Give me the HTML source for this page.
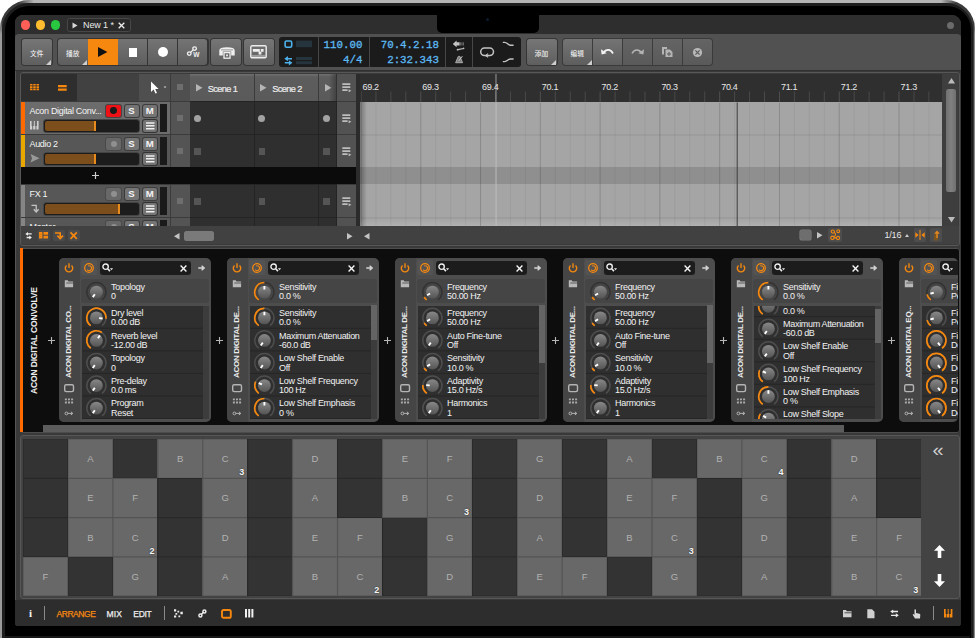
<!DOCTYPE html>
<html lang="zh"><head><meta charset="utf-8"><title>Bitwig Studio - New 1</title>
<style>
html,body{margin:0;padding:0}
body{width:975px;height:638px;overflow:hidden;background:#fff;position:relative;font-family:"Liberation Sans","Noto Sans CJK SC",sans-serif;font-size:9px;color:#ddd}
div,svg{position:absolute;box-sizing:border-box}
.t{white-space:nowrap}
.btn{background:linear-gradient(#767676,#5f5f5f);border-radius:3px;box-shadow:0 0 0 1px #353535}
.btnd{background:linear-gradient(#646464,#5a5a5a)}
.cj{font-family:"Liberation Sans","Noto Sans CJK SC",sans-serif;font-size:6.7px;font-weight:500;color:#ececec;text-align:center;white-space:nowrap}
.mono{font-family:"Liberation Mono",monospace;color:#5cb9f2;-webkit-text-stroke:0.3px #5cb9f2;white-space:nowrap;text-align:right}
.sb{background:#747474;border-radius:2px;box-shadow:0 0 0 1px #3c3c3c;color:#f4f4f4;font-weight:bold;text-align:center;font-size:9.6px;line-height:12px}
.trk{background:#565656}
.pad{background:#686868}
.padd{background:#333}
.pl{color:#b2b2b2;font-size:9.5px;text-align:center;line-height:39px;width:45px;height:39px;white-space:nowrap}
.pn{color:#f6f6f6;font-size:9px;font-weight:bold;white-space:nowrap;text-shadow:0 0 1.5px rgba(0,0,0,.7)}
.dev{background:#4d4d4d;border-radius:5px;overflow:hidden}
.pname{white-space:nowrap;font-size:9px;line-height:10px;color:#f2f2f2;letter-spacing:-0.32px}
.vt{white-space:nowrap;font-weight:bold;font-size:8px;color:#ececec;transform-origin:0 0;transform:rotate(-90deg);letter-spacing:-0.3px}
</style></head>
<body>
<div style="left:0px;top:0px;width:975px;height:700px;border-radius:29px;background:#3a3a3a"></div>
<div style="left:0px;top:0px;width:975px;height:2.6px;background:linear-gradient(90deg,rgba(176,176,176,0) 18px,#b4b4b4 34px,#b4b4b4 941px,rgba(176,176,176,0) 957px)"></div>
<div style="left:0px;top:0px;width:2.2px;height:638px;background:linear-gradient(180deg,rgba(150,150,150,0) 18px,#9a9a9a 34px)"></div>
<div style="left:973.6px;top:0px;width:1.4px;height:638px;background:linear-gradient(180deg,rgba(150,150,150,0) 18px,#8a8a8a 34px)"></div>
<div style="left:2.2px;top:2.6px;width:970.6px;height:700px;border-radius:27px;background:#1d1d1d"></div>
<div style="left:5px;top:5.5px;width:966px;height:700px;border-radius:24px;background:#000"></div>
<div style="left:5px;top:636.4px;width:965px;height:2px;background:#171717"></div>
<div style="left:15px;top:15px;width:946px;height:611px;border-radius:8px 9px 3px 3px;background:#393939;overflow:hidden">
<div style="left:-15px;top:-15px;width:975px;height:638px">
<div style="left:15px;top:15px;width:946px;height:20px;background:#2e2e2e"></div>
<div style="left:20.7px;top:20.3px;width:9.6px;height:9.6px;border-radius:50%;background:#fe5f57"></div>
<div style="left:35.7px;top:20.3px;width:9.6px;height:9.6px;border-radius:50%;background:#febc2e"></div>
<div style="left:50.7px;top:20.3px;width:9.6px;height:9.6px;border-radius:50%;background:#28c840"></div>
<div style="left:67px;top:18.3px;width:63.5px;height:13.4px;border:1px solid #484848;border-radius:2.5px;background:#2a2a2a"></div>
<svg style="left:72px;top:21.5px" width="6" height="7" viewBox="0 0 6 7"><path d="M0.5 0.5 L5.5 3.5 L0.5 6.5Z" fill="#d8d8d8"/></svg>
<div class="t" style="left:83px;top:19.5px;font-size:9px;line-height:11px;color:#e8e8e8;letter-spacing:-0.1px;">New 1 *</div>
<svg style="left:118.2px;top:21.5px" width="7" height="7" viewBox="0 0 7 7"><path d="M0.7 0.7L6.3 6.3M6.3 0.7L0.7 6.3" stroke="#eee" stroke-width="1.3"/></svg>
<div style="left:437px;top:15px;width:102px;height:17.5px;background:#000;border-radius:0 0 5px 5px"></div>
<div style="left:486.3px;top:17.5px;width:3px;height:3px;border-radius:50%;background:#0d1a2e"></div>
<div style="left:946.5px;top:21.5px;width:7px;height:7px;border-radius:50%;background:#6b6b6b"></div>
<div style="left:15px;top:34.3px;width:946px;height:36px;background:#515151;border-radius:4px 4px 0 0"></div>
<div style="left:15px;top:69.7px;width:946px;height:1.8px;background:#303030"></div>
<div style="left:15px;top:71px;width:0.8px;height:529px;background:#555"></div>
<div class="btn" style="left:22px;top:39px;width:29.5px;height:26px;"></div>
<div class="cj" style="left:22px;top:47.5px;width:29.5px;line-height:11px">文件</div>
<svg style="left:46px;top:59.5px" width="5" height="5"><path d="M5 0V5H0Z" fill="#cfcfcf"/></svg>
<div style="left:58px;top:39px;width:149.5px;height:26px;border-radius:3px;background:#353535;box-shadow:0 0 0 1px #353535"></div>
<div style="left:58px;top:39px;width:29.5px;height:26px;border-radius:3px 0 0 3px;background:linear-gradient(#747474,#5e5e5e)"></div>
<div class="cj" style="left:58px;top:47.5px;width:29.5px;line-height:11px">播放</div>
<svg style="left:82px;top:59.5px" width="5" height="5"><path d="M5 0V5H0Z" fill="#cfcfcf"/></svg>
<div style="left:88px;top:39px;width:29.5px;height:26px;background:#f6880f"></div>
<svg style="left:97.8px;top:47px" width="10" height="10"><path d="M0 0L9.4 5L0 10Z" fill="#111"/></svg>
<div style="left:118.2px;top:39px;width:29.3px;height:26px;background:linear-gradient(#747474,#5e5e5e)"></div>
<div style="left:128.5px;top:48px;width:8.5px;height:8.5px;background:#fff"></div>
<div style="left:148.2px;top:39px;width:29.3px;height:26px;background:linear-gradient(#747474,#5e5e5e)"></div>
<div style="left:157.7px;top:46.7px;width:10.6px;height:10.6px;background:#fff;border-radius:50%"></div>
<div style="left:178.2px;top:39px;width:29.3px;height:26px;background:linear-gradient(#747474,#5e5e5e);border-radius:0 3px 3px 0"></div>
<svg style="left:186px;top:46px" width="14" height="12" viewBox="0 0 14 12"><circle cx="3.3" cy="7.6" r="1.8" fill="none" stroke="#f0f0f0" stroke-width="1.3"/><circle cx="8.6" cy="2.6" r="1.8" fill="none" stroke="#f0f0f0" stroke-width="1.3"/><path d="M4.6 6.4L7.3 3.8" stroke="#f0f0f0" stroke-width="1.3"/><text x="7.3" y="10.9" font-family="Liberation Sans,sans-serif" font-size="6.6" font-weight="bold" fill="#f0f0f0">W</text></svg>
<div class="btn" style="left:211.3px;top:39px;width:29.5px;height:26px;"></div>
<svg style="left:218.5px;top:46.5px" width="16" height="12" viewBox="0 0 16 12"><path d="M0.3 8.6V3.6Q0.3 0.3 8 0.3Q15.7 0.3 15.7 3.6V8.6H12.2V4.6H3.8V8.6Z" fill="#f0f0f0"/><path d="M2 2.9H14" stroke="#6c6c6c" stroke-width="0.7"/><rect x="5" y="5.6" width="6" height="5.6" fill="none" stroke="#f0f0f0" stroke-width="1.3"/><rect x="7.1" y="7.5" width="1.8" height="1.8" fill="#f0f0f0"/></svg>
<div class="btn" style="left:244px;top:39px;width:29.8px;height:26px;"></div>
<svg style="left:250.4px;top:45.3px" width="17" height="14" viewBox="0 0 17 14"><rect x="0.8" y="0.8" width="15.4" height="12" rx="1.3" fill="none" stroke="#eee" stroke-width="1.4"/><path d="M2.8 4H9.8V6.7H2.8ZM10.8 4H13.6V6.7H10.8ZM8.6 6.7H11.4V9.4H8.6Z" fill="#eee"/><path d="M1.5 11H15.5" stroke="#eee" stroke-width="0.8"/></svg>
<div style="left:279px;top:36.8px;width:242px;height:30.4px;background:#1b1b1b;border-radius:3px"></div>
<div style="left:317.5px;top:37px;width:1.2px;height:30px;background:#474747"></div>
<div style="left:368.7px;top:37px;width:1.2px;height:30px;background:#474747"></div>
<div style="left:444.7px;top:37px;width:1.2px;height:30px;background:#474747"></div>
<div style="left:472.1px;top:37px;width:1.2px;height:30px;background:#474747"></div>
<svg style="left:284px;top:40px" width="30" height="26" viewBox="0 0 30 26"><rect x="1.1" y="1" width="6.6" height="6.2" rx="1.5" fill="none" stroke="#4db3ee" stroke-width="1.6"/><rect x="12" y="0.6" width="16" height="6.6" fill="#25343d"/><path d="M2.6 18.7H8" stroke="#4db3ee" stroke-width="1.5"/><path d="M0.4 18.7L3.9 16.1V21.3Z" fill="#4db3ee"/><path d="M0.8 22.8H6.2" stroke="#4db3ee" stroke-width="1.5"/><path d="M8.4 22.8L4.9 20.2V25.4Z" fill="#4db3ee"/><rect x="12" y="17" width="16" height="3.1" fill="#25343d"/><rect x="12" y="21.2" width="16" height="3" fill="#25343d"/></svg>
<div class="mono" style="left:319.5px;top:39.1px;width:43px;font-size:10.8px;line-height:13px">110.00</div>
<div class="mono" style="left:319.5px;top:54.1px;width:43px;font-size:10.8px;line-height:13px">4/4</div>
<div class="mono" style="left:370px;top:39.1px;width:69px;font-size:10.8px;line-height:13px">70.4.2.18</div>
<div class="mono" style="left:370px;top:54.1px;width:69px;font-size:10.8px;line-height:13px">2:32.343</div>
<svg style="left:451px;top:39px" width="16" height="26" viewBox="0 0 16 26"><path d="M1.8 4.9L5.6 1.6V3.3H8.6V6.5H5.6V8.2Z" fill="#c4c4c4"/><path d="M9.6 3.3V6.5M11 3.3V6.5M12.4 3.3V6.5" stroke="#888" stroke-width="0.8"/><path d="M6.8 10.6L12.6 9.5" stroke="#c4c4c4" stroke-width="1.1"/><circle cx="6.6" cy="10.7" r="0.9" fill="#c4c4c4"/><circle cx="12.6" cy="9.4" r="0.8" fill="#c4c4c4"/><path d="M4.6 23.7L7.3 17.4H8.9L11.6 23.7Z" fill="#7c7c7c" stroke="#b4b4b4" stroke-width="0.9"/><path d="M7.6 22L11.4 17.2" stroke="#c8c8c8" stroke-width="1"/></svg>
<svg style="left:478px;top:40px" width="40" height="25" viewBox="0 0 40 25"><rect x="2.7" y="8.1" width="12.8" height="7.4" rx="3.7" fill="none" stroke="#c4c4c4" stroke-width="1.5"/><path d="M10 13.6L7.8 15.6L10.2 17.2" stroke="#c4c4c4" stroke-width="1.1" fill="none"/><path d="M24.8 2.4H26.6C29.6 2.4 29.6 5.3 32.6 5.3H35.6" stroke="#c4c4c4" stroke-width="1.4" fill="none"/><path d="M24.8 21.6H26.6C29.6 21.6 29.6 19 32.6 19H35.6" stroke="#c4c4c4" stroke-width="1.4" fill="none"/></svg>
<div class="btn" style="left:526.5px;top:39px;width:30px;height:26px;"></div>
<div class="cj" style="left:526.5px;top:47.5px;width:30px;line-height:11px">添加</div>
<svg style="left:551px;top:59.5px" width="5" height="5"><path d="M5 0V5H0Z" fill="#cfcfcf"/></svg>
<div style="left:562.5px;top:39px;width:149px;height:26px;border-radius:3px;background:#3c3c3c;box-shadow:0 0 0 1px #3a3a3a"></div>
<div style="left:562.5px;top:39px;width:29.5px;height:26px;border-radius:3px 0 0 3px;background:linear-gradient(#747474,#5e5e5e)"></div>
<div class="cj" style="left:562.5px;top:47.5px;width:29.5px;line-height:11px">编辑</div>
<svg style="left:586.5px;top:59.5px" width="5" height="5"><path d="M5 0V5H0Z" fill="#cfcfcf"/></svg>
<div style="left:592.7px;top:39px;width:29.3px;height:26px;background:linear-gradient(#747474,#5e5e5e)"></div>
<svg style="left:600px;top:46px" width="15" height="11" viewBox="0 0 15 11"><path d="M3.5 6.8C6 2.8 10.5 2.8 13 7.5" stroke="#f2f2f2" stroke-width="1.7" fill="none"/><path d="M1 3.2L1.6 8.6L6.6 7.2Z" fill="#f2f2f2"/></svg>
<div class="btnd" style="left:622.7px;top:39px;width:29.3px;height:26px;"></div>
<svg style="left:630px;top:46px" width="15" height="11" viewBox="0 0 15 11"><path d="M11.5 6.8C9 2.8 4.5 2.8 2 7.5" stroke="#b4b4b4" stroke-width="1.5" fill="none"/><path d="M14 3.2L13.4 8.6L8.4 7.2Z" fill="#b4b4b4"/></svg>
<div class="btnd" style="left:652.7px;top:39px;width:29.3px;height:26px;"></div>
<svg style="left:660.5px;top:46px" width="13" height="12" viewBox="0 0 13 12"><path d="M1 1H6V3H3V8.5H1Z" fill="#b4b4b4"/><path d="M4.5 3.5H9L11.5 6V11H4.5Z" fill="#b4b4b4"/><path d="M8 6V10M6 8H10" stroke="#5a5a5a" stroke-width="1"/></svg>
<div class="btnd" style="left:682.7px;top:39px;width:29px;height:26px;border-radius:0 3px 3px 0"></div>
<svg style="left:691.5px;top:46.5px" width="11" height="11" viewBox="0 0 11 11"><circle cx="5.5" cy="5.5" r="4.6" fill="#b8b8b8"/><path d="M3.4 3.4L7.6 7.6M7.6 3.4L3.4 7.6" stroke="#5a5a5a" stroke-width="1.2"/></svg>
<div style="left:19.5px;top:72px;width:940px;height:173.5px;background:#3b3b3b;border:1px solid #575757;border-radius:3px"></div>
<div style="left:21px;top:73.5px;width:56px;height:27.5px;background:#2e2e2e"></div>
<div style="left:77px;top:73.5px;width:62px;height:27.5px;background:#414141"></div>
<div style="left:139px;top:73.5px;width:31px;height:27.5px;background:#4f4f4f"></div>
<div style="left:171px;top:73.5px;width:18.6px;height:27.5px;background:#4f4f4f"></div>
<svg style="left:29.9px;top:84.3px" width="10" height="7" viewBox="0 0 10 7"><path d="M0 0H2.5V1.6H0ZM3.25 0H5.75V1.6H3.25ZM6.5 0H9V1.6H6.5ZM0 2.3H2.5V3.9H0ZM3.25 2.3H5.75V3.9H3.25ZM6.5 2.3H9V3.9H6.5ZM0 4.6H2.5V6.2H0ZM3.25 4.6H5.75V6.2H3.25ZM6.5 4.6H9V6.2H6.5Z" fill="#f6880f"/></svg>
<svg style="left:58.1px;top:84.7px" width="10" height="7" viewBox="0 0 10 7"><path d="M0 0H8.7V2.3H0ZM0 3.5H8.7V5.8H0Z" fill="#f6880f"/></svg>
<svg style="left:150.3px;top:80.8px" width="18" height="14" viewBox="0 0 18 14"><path d="M1 0.5V11L3.6 8.6L5.4 12.6L7 11.9L5.2 8H8.6Z" fill="#fff"/><path d="M13.6 5.6H16.4L15 7.3Z" fill="#ccc"/></svg>
<div style="left:176.8px;top:83.9px;width:6.6px;height:6.6px;background:#6e6e6e"></div>
<div style="left:190.3px;top:73.5px;width:63.7px;height:27.5px;background:linear-gradient(#707070,#5d5d5d 3px,#5a5a5a)"></div>
<svg style="left:195.8px;top:84px" width="7" height="8"><path d="M0 0L6.5 3.8L0 7.6Z" fill="#b5b5b5"/></svg>
<div class="t" style="left:207.8px;top:83.6px;font-size:9.2px;line-height:11.2px;color:#ececec;letter-spacing:-0.62px;-webkit-text-stroke:0.2px #ececec;">Scene 1</div>
<div style="left:254.8px;top:73.5px;width:63.7px;height:27.5px;background:linear-gradient(#707070,#5d5d5d 3px,#5a5a5a)"></div>
<svg style="left:260.3px;top:84px" width="7" height="8"><path d="M0 0L6.5 3.8L0 7.6Z" fill="#b5b5b5"/></svg>
<div class="t" style="left:272.3px;top:83.6px;font-size:9.2px;line-height:11.2px;color:#ececec;letter-spacing:-0.62px;-webkit-text-stroke:0.2px #ececec;">Scene 2</div>
<div style="left:319.3px;top:73.5px;width:16.5px;height:27.5px;background:linear-gradient(#707070,#5d5d5d 3px,#5a5a5a)"></div>
<svg style="left:324.8px;top:84px" width="7" height="8"><path d="M0 0L6.5 3.8L0 7.6Z" fill="#b5b5b5"/></svg>
<div style="left:329px;top:73.5px;width:8px;height:160px;background:linear-gradient(90deg,rgba(40,40,40,0),rgba(40,40,40,.55))"></div>
<div style="left:337px;top:73.5px;width:18.5px;height:27.5px;background:#525252"></div>
<svg style="left:341.5px;top:83px" width="10" height="10" viewBox="0 0 10 10"><path d="M0.3 0.3H8.3V2H0.3ZM0.3 3.3H8.3V5H0.3ZM0.3 6.3H5.6V8H0.3Z" fill="#bdbdbd"/><path d="M6.6 6.2L9.4 7.7L6.6 9.2Z" fill="#bdbdbd"/></svg>
<div style="left:189.6px;top:101.2px;width:147.4px;height:125.2px;background:#242424"></div>
<div style="left:21px;top:102px;width:4.3px;height:32px;background:#ff6a00"></div>
<div style="left:25.3px;top:102px;width:144.5px;height:32px;background:#6c6c6c"></div>
<div class="t" style="left:29.5px;top:106.2px;font-size:9px;line-height:11px;color:#f4f4f4;letter-spacing:-0.32px;">Acon Digital Conv...</div>
<div style="left:106px;top:105px;width:15px;height:11.5px;background:#ee1115;border-radius:2px;box-shadow:0 0 0 1px #444"></div>
<div style="left:110.2px;top:107.3px;width:6.8px;height:6.8px;background:#1a1a1a;border-radius:50%"></div>
<div class="sb" style="left:124.5px;top:105px;width:14px;height:11.5px">S</div>
<div class="sb" style="left:142.5px;top:105px;width:14.5px;height:11.5px">M</div>
<div style="left:44px;top:120px;width:95px;height:11.5px;background:#1c1c1c;border-radius:2.5px;box-shadow:0 0 0 1px #444"></div>
<div style="left:45px;top:121px;width:51px;height:9.5px;background:#7b4e1b;border-radius:2px 0 0 2px"></div>
<div style="left:94.4px;top:121px;width:1.9px;height:9.5px;background:#e88a1c"></div>
<div style="left:142.5px;top:120px;width:14.5px;height:11.5px;background:#747474;border-radius:2px;box-shadow:0 0 0 1px #333"></div>
<svg style="left:145.5px;top:122px" width="9" height="8"><path d="M0 0.3H8.5V1.8H0ZM0 3.1H8.5V4.6H0ZM0 5.9H8.5V7.4H0Z" fill="#f0f0f0"/></svg>
<svg style="left:29.5px;top:121px" width="9" height="9" viewBox="0 0 9 9"><path d="M0 0H2.2V8.5H0ZM3.2 0H5.4V8.5H3.2ZM6.4 0H8.6V8.5H6.4Z" fill="#d0d0d0"/><path d="M1.6 0H3.8V5H1.6ZM4.8 0H7V5H4.8Z" fill="#6c6c6c"/><path d="M2.2 0H3.2V5H2.2ZM5.4 0H6.4V5H5.4Z" fill="#d0d0d0" opacity="0"/></svg>
<div style="left:160px;top:104px;width:7.3px;height:28px;background:#1a1a1a"></div>
<div style="left:171px;top:102px;width:18.6px;height:32px;background:#545454"></div>
<div style="left:190.3px;top:102px;width:63.7px;height:32px;background:#2f2f2f"></div>
<div style="left:254.8px;top:102px;width:63.7px;height:32px;background:#2f2f2f"></div>
<div style="left:319.3px;top:102px;width:17px;height:32px;background:#2f2f2f"></div>
<div style="left:337px;top:102px;width:18.5px;height:32px;background:#525252"></div>
<div style="left:176.8px;top:114.6px;width:6.6px;height:6.6px;background:#6e6e6e"></div>
<div style="left:193.5px;top:114.7px;width:7px;height:7px;background:#a2a2a2;border-radius:50%"></div>
<div style="left:258px;top:114.7px;width:7px;height:7px;background:#a2a2a2;border-radius:50%"></div>
<div style="left:322.5px;top:114.7px;width:7px;height:7px;background:#a2a2a2;border-radius:50%"></div>
<svg style="left:341.5px;top:114px" width="10" height="10" viewBox="0 0 10 10"><path d="M0.3 0.3H8.3V2H0.3ZM0.3 3.3H8.3V5H0.3ZM0.3 6.3H5.6V8H0.3Z" fill="#bdbdbd"/><path d="M6.6 6.2L9.4 7.7L6.6 9.2Z" fill="#bdbdbd"/></svg>
<div style="left:21px;top:135px;width:4.3px;height:32px;background:#e9a800"></div>
<div style="left:25.3px;top:135px;width:144.5px;height:32px;background:#575757"></div>
<div class="t" style="left:29.5px;top:139.2px;font-size:9px;line-height:11px;color:#f4f4f4;letter-spacing:-0.32px;">Audio 2</div>
<div style="left:106px;top:138px;width:15px;height:11.5px;background:#686868;border-radius:2px;box-shadow:0 0 0 1px #4a4a4a"></div>
<div style="left:110.5px;top:140.7px;width:6px;height:6px;background:#909090;border-radius:50%"></div>
<div class="sb" style="left:124.5px;top:138px;width:14px;height:11.5px">S</div>
<div class="sb" style="left:142.5px;top:138px;width:14.5px;height:11.5px">M</div>
<div style="left:44px;top:153px;width:95px;height:11.5px;background:#1c1c1c;border-radius:2.5px;box-shadow:0 0 0 1px #444"></div>
<div style="left:45px;top:154px;width:51px;height:9.5px;background:#7b4e1b;border-radius:2px 0 0 2px"></div>
<div style="left:94.4px;top:154px;width:1.9px;height:9.5px;background:#e88a1c"></div>
<div style="left:142.5px;top:153px;width:14.5px;height:11.5px;background:#747474;border-radius:2px;box-shadow:0 0 0 1px #333"></div>
<svg style="left:145.5px;top:155px" width="9" height="8"><path d="M0 0.3H8.5V1.8H0ZM0 3.1H8.5V4.6H0ZM0 5.9H8.5V7.4H0Z" fill="#f0f0f0"/></svg>
<svg style="left:29.5px;top:154px" width="10" height="9" viewBox="0 0 10 9"><path d="M0.5 0L9.5 4.3L0.5 8.6L2 4.3Z" fill="#999"/></svg>
<div style="left:160px;top:137px;width:7.3px;height:28px;background:#1a1a1a"></div>
<div style="left:171px;top:135px;width:18.6px;height:32px;background:#545454"></div>
<div style="left:190.3px;top:135px;width:63.7px;height:32px;background:#2f2f2f"></div>
<div style="left:254.8px;top:135px;width:63.7px;height:32px;background:#2f2f2f"></div>
<div style="left:319.3px;top:135px;width:17px;height:32px;background:#2f2f2f"></div>
<div style="left:337px;top:135px;width:18.5px;height:32px;background:#525252"></div>
<div style="left:176.8px;top:147.6px;width:6.6px;height:6.6px;background:#6e6e6e"></div>
<div style="left:194.1px;top:148px;width:6.5px;height:6.5px;background:#555"></div>
<div style="left:258.6px;top:148px;width:6.5px;height:6.5px;background:#555"></div>
<div style="left:323.1px;top:148px;width:6.5px;height:6.5px;background:#555"></div>
<svg style="left:341.5px;top:147px" width="10" height="10" viewBox="0 0 10 10"><path d="M0.3 0.3H8.3V2H0.3ZM0.3 3.3H8.3V5H0.3ZM0.3 6.3H5.6V8H0.3Z" fill="#bdbdbd"/><path d="M6.6 6.2L9.4 7.7L6.6 9.2Z" fill="#bdbdbd"/></svg>
<div style="left:21px;top:167.2px;width:335px;height:16.8px;background:#0b0b0b"></div>
<svg style="left:91.5px;top:172px" width="7" height="7"><path d="M3.5 0V7M0 3.5H7" stroke="#cfcfcf" stroke-width="1.2"/></svg>
<div style="left:21px;top:185px;width:4.3px;height:32px;background:#858585"></div>
<div style="left:25.3px;top:185px;width:144.5px;height:32px;background:#575757"></div>
<div class="t" style="left:29.5px;top:189.2px;font-size:9px;line-height:11px;color:#f4f4f4;letter-spacing:-0.32px;">FX 1</div>
<div style="left:106px;top:188px;width:15px;height:11.5px;background:#686868;border-radius:2px;box-shadow:0 0 0 1px #4a4a4a"></div>
<div style="left:110.5px;top:190.7px;width:6px;height:6px;background:#909090;border-radius:50%"></div>
<div class="sb" style="left:124.5px;top:188px;width:14px;height:11.5px">S</div>
<div class="sb" style="left:142.5px;top:188px;width:14.5px;height:11.5px">M</div>
<div style="left:44px;top:203px;width:95px;height:11.5px;background:#1c1c1c;border-radius:2.5px;box-shadow:0 0 0 1px #444"></div>
<div style="left:45px;top:204px;width:75px;height:9.5px;background:#7b4e1b;border-radius:2px 0 0 2px"></div>
<div style="left:118.4px;top:204px;width:1.9px;height:9.5px;background:#e88a1c"></div>
<div style="left:142.5px;top:203px;width:14.5px;height:11.5px;background:#747474;border-radius:2px;box-shadow:0 0 0 1px #333"></div>
<svg style="left:145.5px;top:205px" width="9" height="8"><path d="M0 0.3H8.5V1.8H0ZM0 3.1H8.5V4.6H0ZM0 5.9H8.5V7.4H0Z" fill="#f0f0f0"/></svg>
<svg style="left:30.5px;top:204px" width="9" height="9" viewBox="0 0 9 9"><path d="M0.5 1.4H5.2V7" stroke="#c4c4c4" stroke-width="1.3" fill="none"/><path d="M2.8 5.2L5.2 7.9L7.6 5.2" stroke="#c4c4c4" stroke-width="1.3" fill="none"/></svg>
<div style="left:160px;top:187px;width:7.3px;height:28px;background:#1a1a1a"></div>
<div style="left:171px;top:185px;width:18.6px;height:32px;background:#545454"></div>
<div style="left:190.3px;top:185px;width:63.7px;height:32px;background:#2f2f2f"></div>
<div style="left:254.8px;top:185px;width:63.7px;height:32px;background:#2f2f2f"></div>
<div style="left:319.3px;top:185px;width:17px;height:32px;background:#2f2f2f"></div>
<div style="left:337px;top:185px;width:18.5px;height:32px;background:#525252"></div>
<div style="left:176.8px;top:197.6px;width:6.6px;height:6.6px;background:#6e6e6e"></div>
<div style="left:194.1px;top:198px;width:6.5px;height:6.5px;background:#555"></div>
<div style="left:258.6px;top:198px;width:6.5px;height:6.5px;background:#555"></div>
<div style="left:323.1px;top:198px;width:6.5px;height:6.5px;background:#555"></div>
<svg style="left:341.5px;top:197px" width="10" height="10" viewBox="0 0 10 10"><path d="M0.3 0.3H8.3V2H0.3ZM0.3 3.3H8.3V5H0.3ZM0.3 6.3H5.6V8H0.3Z" fill="#bdbdbd"/><path d="M6.6 6.2L9.4 7.7L6.6 9.2Z" fill="#bdbdbd"/></svg>
<div style="left:21px;top:218px;width:335px;height:8.4px;overflow:hidden"><div style="left:-21px;top:-218px;width:400px;height:300px">
<div style="left:21px;top:218px;width:4.3px;height:32px;background:#858585"></div>
<div style="left:25.3px;top:218px;width:144.5px;height:32px;background:#575757"></div>
<div class="t" style="left:29.5px;top:222.2px;font-size:9px;line-height:11px;color:#f4f4f4;letter-spacing:-0.32px;">Master</div>
<div style="left:106px;top:221px;width:15px;height:11.5px;background:#686868;border-radius:2px;box-shadow:0 0 0 1px #4a4a4a"></div>
<div style="left:110.5px;top:223.7px;width:6px;height:6px;background:#909090;border-radius:50%"></div>
<div class="sb" style="left:124.5px;top:221px;width:14px;height:11.5px">S</div>
<div class="sb" style="left:142.5px;top:221px;width:14.5px;height:11.5px">M</div>
<div style="left:44px;top:236px;width:95px;height:11.5px;background:#1c1c1c;border-radius:2.5px;box-shadow:0 0 0 1px #444"></div>
<div style="left:45px;top:237px;width:75px;height:9.5px;background:#7b4e1b;border-radius:2px 0 0 2px"></div>
<div style="left:118.4px;top:237px;width:1.9px;height:9.5px;background:#e88a1c"></div>
<div style="left:142.5px;top:236px;width:14.5px;height:11.5px;background:#747474;border-radius:2px;box-shadow:0 0 0 1px #333"></div>
<svg style="left:145.5px;top:238px" width="9" height="8"><path d="M0 0.3H8.5V1.8H0ZM0 3.1H8.5V4.6H0ZM0 5.9H8.5V7.4H0Z" fill="#f0f0f0"/></svg>
<div style="left:160px;top:220px;width:7.3px;height:28px;background:#1a1a1a"></div>
<div style="left:171px;top:218px;width:18.6px;height:32px;background:#545454"></div>
<div style="left:190.3px;top:218px;width:63.7px;height:32px;background:#2f2f2f"></div>
<div style="left:254.8px;top:218px;width:63.7px;height:32px;background:#2f2f2f"></div>
<div style="left:319.3px;top:218px;width:17px;height:32px;background:#2f2f2f"></div>
<div style="left:337px;top:218px;width:18.5px;height:32px;background:#525252"></div>
<div style="left:176.8px;top:230.6px;width:6.6px;height:6.6px;background:#6e6e6e"></div>
<div style="left:194.1px;top:231px;width:6.5px;height:6.5px;background:#555"></div>
<div style="left:258.6px;top:231px;width:6.5px;height:6.5px;background:#555"></div>
<div style="left:323.1px;top:231px;width:6.5px;height:6.5px;background:#555"></div>
<svg style="left:341.5px;top:230px" width="10" height="10" viewBox="0 0 10 10"><path d="M0.3 0.3H8.3V2H0.3ZM0.3 3.3H8.3V5H0.3ZM0.3 6.3H5.6V8H0.3Z" fill="#bdbdbd"/><path d="M6.6 6.2L9.4 7.7L6.6 9.2Z" fill="#bdbdbd"/></svg>
</div></div>
<div style="left:355.5px;top:73.5px;width:5px;height:153px;background:#2b2b2b"></div>
<div style="left:360px;top:73.5px;width:582.3px;height:28px;background:#2f2f2f"></div>
<div style="left:360px;top:102px;width:582.3px;height:124.4px;background:#a5a5a5"></div>
<div style="left:360px;top:167.2px;width:582.3px;height:16.8px;background:#8f8f8f"></div>
<div style="left:360px;top:102px;width:7px;height:124.4px;background:linear-gradient(90deg,rgba(0,0,0,.3),rgba(0,0,0,0))"></div>
<div style="left:360px;top:219px;width:582.3px;height:7.4px;background:linear-gradient(rgba(255,255,255,0),rgba(255,255,255,.13))"></div>
<svg style="left:360.9px;top:73.5px" width="581.6" height="153" viewBox="0 0 581.6 153"><path d="M0.00 17.5V28" stroke="#505050" stroke-width="1"/><path d="M0.00 28.5V153" stroke="rgba(0,0,0,0.17)" stroke-width="1"/><path d="M14.95 17.5V28" stroke="#494949" stroke-width="1"/><path d="M14.95 28.5V153" stroke="rgba(0,0,0,0.055)" stroke-width="1"/><path d="M29.89 17.5V28" stroke="#494949" stroke-width="1"/><path d="M29.89 28.5V153" stroke="rgba(0,0,0,0.055)" stroke-width="1"/><path d="M44.84 17.5V28" stroke="#494949" stroke-width="1"/><path d="M44.84 28.5V153" stroke="rgba(0,0,0,0.055)" stroke-width="1"/><path d="M59.78 17.5V28" stroke="#505050" stroke-width="1"/><path d="M59.78 28.5V153" stroke="rgba(0,0,0,0.17)" stroke-width="1"/><path d="M74.72 17.5V28" stroke="#494949" stroke-width="1"/><path d="M74.72 28.5V153" stroke="rgba(0,0,0,0.055)" stroke-width="1"/><path d="M89.67 17.5V28" stroke="#494949" stroke-width="1"/><path d="M89.67 28.5V153" stroke="rgba(0,0,0,0.055)" stroke-width="1"/><path d="M104.62 17.5V28" stroke="#494949" stroke-width="1"/><path d="M104.62 28.5V153" stroke="rgba(0,0,0,0.055)" stroke-width="1"/><path d="M119.56 17.5V28" stroke="#505050" stroke-width="1"/><path d="M119.56 28.5V153" stroke="rgba(0,0,0,0.17)" stroke-width="1"/><path d="M134.50 17.5V28" stroke="#494949" stroke-width="1"/><path d="M134.50 28.5V153" stroke="rgba(0,0,0,0.055)" stroke-width="1"/><path d="M149.45 17.5V28" stroke="#494949" stroke-width="1"/><path d="M149.45 28.5V153" stroke="rgba(0,0,0,0.055)" stroke-width="1"/><path d="M164.40 17.5V28" stroke="#494949" stroke-width="1"/><path d="M164.40 28.5V153" stroke="rgba(0,0,0,0.055)" stroke-width="1"/><path d="M179.34 17.5V28" stroke="#505050" stroke-width="1"/><path d="M179.34 28.5V153" stroke="rgba(0,0,0,0.17)" stroke-width="1"/><path d="M194.28 17.5V28" stroke="#494949" stroke-width="1"/><path d="M194.28 28.5V153" stroke="rgba(0,0,0,0.055)" stroke-width="1"/><path d="M209.23 17.5V28" stroke="#494949" stroke-width="1"/><path d="M209.23 28.5V153" stroke="rgba(0,0,0,0.055)" stroke-width="1"/><path d="M224.18 17.5V28" stroke="#494949" stroke-width="1"/><path d="M224.18 28.5V153" stroke="rgba(0,0,0,0.055)" stroke-width="1"/><path d="M239.12 17.5V28" stroke="#505050" stroke-width="1"/><path d="M239.12 28.5V153" stroke="rgba(0,0,0,0.17)" stroke-width="1"/><path d="M254.06 17.5V28" stroke="#494949" stroke-width="1"/><path d="M254.06 28.5V153" stroke="rgba(0,0,0,0.055)" stroke-width="1"/><path d="M269.01 17.5V28" stroke="#494949" stroke-width="1"/><path d="M269.01 28.5V153" stroke="rgba(0,0,0,0.055)" stroke-width="1"/><path d="M283.95 17.5V28" stroke="#494949" stroke-width="1"/><path d="M283.95 28.5V153" stroke="rgba(0,0,0,0.055)" stroke-width="1"/><path d="M298.90 17.5V28" stroke="#505050" stroke-width="1"/><path d="M298.90 28.5V153" stroke="rgba(0,0,0,0.17)" stroke-width="1"/><path d="M313.85 17.5V28" stroke="#494949" stroke-width="1"/><path d="M313.85 28.5V153" stroke="rgba(0,0,0,0.055)" stroke-width="1"/><path d="M328.79 17.5V28" stroke="#494949" stroke-width="1"/><path d="M328.79 28.5V153" stroke="rgba(0,0,0,0.055)" stroke-width="1"/><path d="M343.74 17.5V28" stroke="#494949" stroke-width="1"/><path d="M343.74 28.5V153" stroke="rgba(0,0,0,0.055)" stroke-width="1"/><path d="M358.68 17.5V28" stroke="#505050" stroke-width="1"/><path d="M358.68 28.5V153" stroke="rgba(0,0,0,0.17)" stroke-width="1"/><path d="M373.62 17.5V28" stroke="#494949" stroke-width="1"/><path d="M373.62 28.5V153" stroke="rgba(0,0,0,0.055)" stroke-width="1"/><path d="M388.57 17.5V28" stroke="#494949" stroke-width="1"/><path d="M388.57 28.5V153" stroke="rgba(0,0,0,0.055)" stroke-width="1"/><path d="M403.51 17.5V28" stroke="#494949" stroke-width="1"/><path d="M403.51 28.5V153" stroke="rgba(0,0,0,0.055)" stroke-width="1"/><path d="M418.46 17.5V28" stroke="#505050" stroke-width="1"/><path d="M418.46 28.5V153" stroke="rgba(0,0,0,0.17)" stroke-width="1"/><path d="M433.41 17.5V28" stroke="#494949" stroke-width="1"/><path d="M433.41 28.5V153" stroke="rgba(0,0,0,0.055)" stroke-width="1"/><path d="M448.35 17.5V28" stroke="#494949" stroke-width="1"/><path d="M448.35 28.5V153" stroke="rgba(0,0,0,0.055)" stroke-width="1"/><path d="M463.30 17.5V28" stroke="#494949" stroke-width="1"/><path d="M463.30 28.5V153" stroke="rgba(0,0,0,0.055)" stroke-width="1"/><path d="M478.24 17.5V28" stroke="#505050" stroke-width="1"/><path d="M478.24 28.5V153" stroke="rgba(0,0,0,0.17)" stroke-width="1"/><path d="M493.19 17.5V28" stroke="#494949" stroke-width="1"/><path d="M493.19 28.5V153" stroke="rgba(0,0,0,0.055)" stroke-width="1"/><path d="M508.13 17.5V28" stroke="#494949" stroke-width="1"/><path d="M508.13 28.5V153" stroke="rgba(0,0,0,0.055)" stroke-width="1"/><path d="M523.08 17.5V28" stroke="#494949" stroke-width="1"/><path d="M523.08 28.5V153" stroke="rgba(0,0,0,0.055)" stroke-width="1"/><path d="M538.02 17.5V28" stroke="#505050" stroke-width="1"/><path d="M538.02 28.5V153" stroke="rgba(0,0,0,0.17)" stroke-width="1"/><path d="M552.97 17.5V28" stroke="#494949" stroke-width="1"/><path d="M552.97 28.5V153" stroke="rgba(0,0,0,0.055)" stroke-width="1"/><path d="M567.91 17.5V28" stroke="#494949" stroke-width="1"/><path d="M567.91 28.5V153" stroke="rgba(0,0,0,0.055)" stroke-width="1"/><path d="M0 61H582M0 144H582" stroke="rgba(0,0,0,0.1)" stroke-width="1"/><path d="M135 0V28.5" stroke="#a8a8a8" stroke-width="0.9"/><path d="M135 28.5V153" stroke="#c6c6c6" stroke-width="0.9"/><path d="M376.2 28.5V153" stroke="#3c3c3c" stroke-width="1"/></svg>
<div class="t" style="left:362.5px;top:82px;font-size:9px;line-height:11px;color:#e8e8e8;letter-spacing:-0.3px;">69.2</div>
<div class="t" style="left:422.28px;top:82px;font-size:9px;line-height:11px;color:#e8e8e8;letter-spacing:-0.3px;">69.3</div>
<div class="t" style="left:482.06px;top:82px;font-size:9px;line-height:11px;color:#e8e8e8;letter-spacing:-0.3px;">69.4</div>
<div class="t" style="left:541.84px;top:82px;font-size:9px;line-height:11px;color:#e8e8e8;letter-spacing:-0.3px;">70.1</div>
<div class="t" style="left:601.62px;top:82px;font-size:9px;line-height:11px;color:#e8e8e8;letter-spacing:-0.3px;">70.2</div>
<div class="t" style="left:661.4px;top:82px;font-size:9px;line-height:11px;color:#e8e8e8;letter-spacing:-0.3px;">70.3</div>
<div class="t" style="left:721.1800000000001px;top:82px;font-size:9px;line-height:11px;color:#e8e8e8;letter-spacing:-0.3px;">70.4</div>
<div class="t" style="left:780.96px;top:82px;font-size:9px;line-height:11px;color:#e8e8e8;letter-spacing:-0.3px;">71.1</div>
<div class="t" style="left:840.74px;top:82px;font-size:9px;line-height:11px;color:#e8e8e8;letter-spacing:-0.3px;">71.2</div>
<div class="t" style="left:900.52px;top:82px;font-size:9px;line-height:11px;color:#e8e8e8;letter-spacing:-0.3px;">71.3</div>
<div style="left:942.3px;top:73.5px;width:16px;height:153px;background:#3e3e3e"></div>
<svg style="left:947.5px;top:77.5px" width="7" height="6"><path d="M3.5 0L7 5.5H0Z" fill="#bbb"/></svg>
<div style="left:946.2px;top:88.5px;width:9.4px;height:103px;background:linear-gradient(90deg,#707070,#808080 50%,#707070);border-radius:2.5px"></div>
<svg style="left:947.5px;top:216.5px" width="7" height="6"><path d="M3.5 5.5L7 0H0Z" fill="#bbb"/></svg>
<div style="left:20.5px;top:226.4px;width:938px;height:17.8px;background:#414141"></div>
<div style="left:37.7px;top:229.8px;width:12.4px;height:11px;background:#4b4b4b;border-radius:2px"></div>
<div style="left:52.7px;top:229.8px;width:12.4px;height:11px;background:#4b4b4b;border-radius:2px"></div>
<div style="left:67.6px;top:229.8px;width:12.4px;height:11px;background:#4b4b4b;border-radius:2px"></div>
<svg style="left:25px;top:230px" width="60" height="12" viewBox="0 0 60 12"><path d="M2.2 3.9H6.7M1.6 7.5H5.6" stroke="#ececec" stroke-width="1.3"/><path d="M0.3 3.9L3 2V5.8ZM6.9 7.5L4.2 5.6V9.4Z" fill="#ececec"/><path d="M14 2.1H17.4V8.4H14ZM18.5 2.1H23V4.7H18.5ZM18.5 5.8H23V8.4H18.5Z" fill="#f6880f"/><path d="M14 4.2H17.4M14 6.3H17.4" stroke="#c8700e" stroke-width="0.5"/><path d="M30 3H35.2V7.6" stroke="#f6880f" stroke-width="1.6" fill="none"/><path d="M32.4 5.6L35.2 8.6L38 5.6" stroke="#f6880f" stroke-width="1.6" fill="none"/><path d="M45.5 2.3L51.8 8.8M51.8 2.3L45.5 8.8" stroke="#f6880f" stroke-width="1.7"/></svg>
<svg style="left:174px;top:232.5px" width="6" height="7"><path d="M5.5 0V6.4L0 3.2Z" fill="#c4c4c4"/></svg>
<div style="left:184px;top:230.5px;width:30px;height:10.5px;background:#7a7a7a;border-radius:2.5px"></div>
<svg style="left:346.5px;top:232.5px" width="6" height="7"><path d="M0 0V6.4L5.5 3.2Z" fill="#c4c4c4"/></svg>
<svg style="left:363.5px;top:232.5px" width="6" height="7"><path d="M5.5 0V6.4L0 3.2Z" fill="#c4c4c4"/></svg>
<div style="left:799.5px;top:230px;width:11.5px;height:10px;background:#6e6e6e;border-radius:2px;box-shadow:0 0 0 0.6px #7c7c7c"></div>
<svg style="left:816.5px;top:231.8px" width="6" height="7"><path d="M0 0V6.4L5.5 3.2Z" fill="#c4c4c4"/></svg>
<div style="left:827.5px;top:227.8px;width:14.5px;height:14.5px;background:#4d4d4d;border-radius:2px"></div>
<svg style="left:829.5px;top:229.2px" width="11" height="12" viewBox="0 0 11 12"><circle cx="2.8" cy="2.6" r="1.6" fill="none" stroke="#f6880f" stroke-width="1.1"/><circle cx="8.2" cy="2.2" r="1.4" fill="none" stroke="#f6880f" stroke-width="1.1"/><circle cx="2.4" cy="8.8" r="1.7" fill="none" stroke="#f6880f" stroke-width="1.1"/><circle cx="8" cy="9" r="1.6" fill="none" stroke="#f6880f" stroke-width="1.1"/><path d="M4.2 3.4C6 5 6 6 4 8.2M4.2 8.9H6.4" stroke="#f6880f" stroke-width="1.1" fill="none"/></svg>
<div class="t" style="left:884.5px;top:229.8px;font-size:9px;line-height:11px;color:#e6e6e6;letter-spacing:-0.2px;">1/16</div>
<svg style="left:904.5px;top:233.8px" width="4" height="3"><path d="M2 0L4 3H0Z" fill="#ccc"/></svg>
<div style="left:913.5px;top:227.8px;width:12.5px;height:14.5px;background:#4d4d4d;border-radius:2px"></div>
<svg style="left:914.5px;top:230.2px" width="10" height="10" viewBox="0 0 10 10"><path d="M5 0V10" stroke="#f6880f" stroke-width="1.1"/><path d="M0.3 2.2L3.6 5L0.3 7.8ZM9.7 2.2L6.4 5L9.7 7.8Z" fill="#f6880f"/></svg>
<div style="left:929.5px;top:227.8px;width:12.5px;height:14.5px;background:#4d4d4d;border-radius:2px"></div>
<svg style="left:931px;top:229.7px" width="10" height="11" viewBox="0 0 10 11"><path d="M3 4.5H7V10.5H3Z" fill="#7a5520"/><path d="M6 0.5L8.8 3.8H3.2Z" fill="#e88a1c"/><path d="M5.3 3.5H6.7V8H5.3Z" fill="#e88a1c"/></svg>
<div style="left:19.5px;top:247.5px;width:940px;height:185px;background:#0d0d0d;border:1px solid #4c4c4c;border-radius:3px;z-index:0"></div>
<div style="left:20px;top:248.3px;width:3.2px;height:183.4px;background:#ff6a00"></div>
<div class="vt" style="left:28.5px;top:394px;font-size:8.5px;line-height:10px;letter-spacing:-0.15px">ACON DIGITAL CONVOLVE</div>
<div style="left:43px;top:425px;width:801px;height:6.5px;background:#5c5c5c"></div>
<svg width="0" height="0" style="left:0;top:0"><defs><linearGradient id="kg" x1="0" y1="0" x2="0" y2="1"><stop offset="0" stop-color="#888"/><stop offset="1" stop-color="#545454"/></linearGradient></defs></svg>
<svg style="left:47.5px;top:336.5px" width="7" height="7"><path d="M3.5 0V7M0 3.5H7" stroke="#b8b8b8" stroke-width="1.1"/></svg>
<div class="dev" style="left:59px;top:258.2px;width:152px;height:163.6px">
<div style="left:0;top:0;width:20.6px;height:164px;background:#454545"></div>
<svg style="left:0;top:0" width="21" height="164" viewBox="0 0 21 164"><path d="M7.5 7.4A3.7 3.7 0 1 0 12.5 7.4" stroke="#f6880f" stroke-width="1.4" fill="none"/><path d="M10 5.2V10" stroke="#f6880f" stroke-width="1.4"/><path d="M5.8 22.2H8.8L9.5 23.4H14.1V29.2H5.8Z" fill="#b9b9b9"/><path d="M7.3 25H14.1" stroke="#454545" stroke-width="0.8"/><rect x="5.7" y="126.8" width="8.8" height="6.8" rx="1.5" fill="none" stroke="#b4b4b4" stroke-width="1.4"/><path d="M5.9 140.4H7.9V142.2H5.9ZM9 140.4H11V142.2H9ZM12.1 140.4H14.1V142.2H12.1ZM5.9 143.6H7.9V145.4H5.9ZM9 143.6H11V145.4H9ZM12.1 143.6H14.1V145.4H12.1Z" fill="#a8a8a8"/><circle cx="7.4" cy="155.4" r="1.4" fill="none" stroke="#b4b4b4" stroke-width="1"/><path d="M8.8 155.4H13.6M11.9 153.8L13.8 155.4L11.9 157" stroke="#b4b4b4" stroke-width="1" fill="none"/></svg>
<div class="vt" style="left:5.2px;top:120.3px;font-size:8px;line-height:10px">ACON DIGITAL CO...</div>
<div style="left:22.4px;top:1.8px;width:15.6px;height:15.4px;background:#535353;border-radius:2px"></div>
<svg style="left:24.3px;top:3.8px" width="12" height="12" viewBox="0 0 12 12"><circle cx="6" cy="6" r="4.3" fill="none" stroke="#f6880f" stroke-width="1.3"/><path d="M4.2 7.6A2.4 2.4 0 1 0 5.2 4" fill="none" stroke="#f6880f" stroke-width="1.1"/></svg>
<div style="left:40.5px;top:2.8px;width:91.5px;height:14.5px;background:#1c1c1c;border-radius:3px"></div>
<svg style="left:43px;top:5px" width="13" height="10" viewBox="0 0 13 10"><circle cx="3.6" cy="3.7" r="2.7" fill="none" stroke="#f0f0f0" stroke-width="1.4"/><path d="M5.6 5.7L8 8.1" stroke="#f0f0f0" stroke-width="1.6"/><path d="M7.9 5.2H11.1L9.5 7.2Z" fill="#e6e6e6"/></svg>
<svg style="left:121.2px;top:6.5px" width="7" height="7" viewBox="0 0 7 7"><path d="M0.6 0.6L6.4 6.4M6.4 0.6L0.6 6.4" stroke="#f4f4f4" stroke-width="1.4"/></svg>
<svg style="left:139.3px;top:7px" width="7" height="6" viewBox="0 0 7 6"><path d="M0.3 3H5M3.6 0.8L6.2 3L3.6 5.2" stroke="#d8d8d8" stroke-width="1.3" fill="none"/></svg>
<div style="left:22.4px;top:20.8px;width:127.3px;height:23.9px;background:#454545;border-radius:3px"></div>
<div style="left:22.5px;top:47.6px;width:127.5px;height:113.4px;background:#3c3c3c"></div>
<div style="left:22.5px;top:47.6px;width:121.5px;height:113.4px;background:#2f2f2f;overflow:hidden">
<svg style="left:0;top:0" width="122" height="114" viewBox="0 0 122 114"><path d="M0 22.30H122" stroke="#262626" stroke-width="1"/><path d="M8.76 19.67A9.6 9.6 0 1 1 20.04 19.67" fill="none" stroke="#4e4e4e" stroke-width="1.5"/><path d="M8.76 19.67A9.6 9.6 0 1 1 23.96 12.74" fill="none" stroke="#f6880f" stroke-width="1.7"/><circle cx="14.4" cy="11.9" r="6.4" fill="url(#kg)"/><path d="M17.09 12.14L20.58 12.44" stroke="#fff" stroke-width="1.9"/><path d="M0 44.85H122" stroke="#262626" stroke-width="1"/><path d="M8.76 42.22A9.6 9.6 0 1 1 20.04 42.22" fill="none" stroke="#4e4e4e" stroke-width="1.5"/><path d="M8.76 42.22A9.6 9.6 0 0 1 19.85 26.54" fill="none" stroke="#f6880f" stroke-width="1.7"/><circle cx="14.4" cy="34.45" r="6.4" fill="url(#kg)"/><path d="M15.93 32.23L17.92 29.34" stroke="#fff" stroke-width="1.9"/><path d="M0 67.40H122" stroke="#262626" stroke-width="1"/><path d="M8.76 64.77A9.6 9.6 0 1 1 20.04 64.77" fill="none" stroke="#4e4e4e" stroke-width="1.5"/><circle cx="14.4" cy="57.0" r="6.4" fill="url(#kg)"/><path d="M12.81 59.18L10.76 62.02" stroke="#fff" stroke-width="1.9"/><path d="M0 89.95H122" stroke="#262626" stroke-width="1"/><path d="M8.76 87.32A9.6 9.6 0 1 1 20.04 87.32" fill="none" stroke="#4e4e4e" stroke-width="1.5"/><circle cx="14.4" cy="79.55" r="6.4" fill="url(#kg)"/><path d="M12.81 81.73L10.76 84.57" stroke="#fff" stroke-width="1.9"/><path d="M0 112.50H122" stroke="#262626" stroke-width="1"/><path d="M8.76 109.87A9.6 9.6 0 1 1 20.04 109.87" fill="none" stroke="#4e4e4e" stroke-width="1.5"/><circle cx="14.4" cy="102.1" r="6.4" fill="url(#kg)"/><path d="M12.81 104.28L10.76 107.12" stroke="#fff" stroke-width="1.9"/><path d="M0 135.05H122" stroke="#262626" stroke-width="1"/><path d="M8.76 132.42A9.6 9.6 0 1 1 20.04 132.42" fill="none" stroke="#4e4e4e" stroke-width="1.5"/><circle cx="14.4" cy="124.65" r="6.4" fill="url(#kg)"/><path d="M12.81 126.83L10.76 129.67" stroke="#fff" stroke-width="1.9"/></svg>
<div class="pname" style="left:29.6px;top:2.20px">Dry level</div>
<div class="pname" style="left:29.6px;top:11.70px">0.00 dB</div>
<div class="pname" style="left:29.6px;top:24.75px">Reverb level</div>
<div class="pname" style="left:29.6px;top:34.25px">-12.00 dB</div>
<div class="pname" style="left:29.6px;top:47.30px">Topology</div>
<div class="pname" style="left:29.6px;top:56.80px">0</div>
<div class="pname" style="left:29.6px;top:69.85px">Pre-delay</div>
<div class="pname" style="left:29.6px;top:79.35px">0.0 ms</div>
<div class="pname" style="left:29.6px;top:92.40px">Program</div>
<div class="pname" style="left:29.6px;top:101.90px">Reset</div>
<div class="pname" style="left:29.6px;top:114.95px">Impulse</div>
<div class="pname" style="left:29.6px;top:124.45px">1</div>
</div>
<svg style="left:22.5px;top:20.8px" width="40" height="26" viewBox="0 0 40 26"><path d="M8.76 20.87A9.6 9.6 0 1 1 20.04 20.87" fill="none" stroke="#333" stroke-width="1.5"/><circle cx="14.4" cy="13.1" r="6.4" fill="url(#kg)"/><path d="M12.81 15.28L10.76 18.12" stroke="#fff" stroke-width="1.9"/></svg>
<div class="pname" style="left:52.1px;top:23.7px">Topology</div>
<div class="pname" style="left:52.1px;top:33.2px">0</div>
</div>
<svg style="left:215.5px;top:336.5px" width="7" height="7"><path d="M3.5 0V7M0 3.5H7" stroke="#b8b8b8" stroke-width="1.1"/></svg>
<div class="dev" style="left:227px;top:258.2px;width:152px;height:163.6px">
<div style="left:0;top:0;width:20.6px;height:164px;background:#454545"></div>
<svg style="left:0;top:0" width="21" height="164" viewBox="0 0 21 164"><path d="M7.5 7.4A3.7 3.7 0 1 0 12.5 7.4" stroke="#f6880f" stroke-width="1.4" fill="none"/><path d="M10 5.2V10" stroke="#f6880f" stroke-width="1.4"/><path d="M5.8 22.2H8.8L9.5 23.4H14.1V29.2H5.8Z" fill="#b9b9b9"/><path d="M7.3 25H14.1" stroke="#454545" stroke-width="0.8"/><rect x="5.7" y="126.8" width="8.8" height="6.8" rx="1.5" fill="none" stroke="#b4b4b4" stroke-width="1.4"/><path d="M5.9 140.4H7.9V142.2H5.9ZM9 140.4H11V142.2H9ZM12.1 140.4H14.1V142.2H12.1ZM5.9 143.6H7.9V145.4H5.9ZM9 143.6H11V145.4H9ZM12.1 143.6H14.1V145.4H12.1Z" fill="#a8a8a8"/><circle cx="7.4" cy="155.4" r="1.4" fill="none" stroke="#b4b4b4" stroke-width="1"/><path d="M8.8 155.4H13.6M11.9 153.8L13.8 155.4L11.9 157" stroke="#b4b4b4" stroke-width="1" fill="none"/></svg>
<div class="vt" style="left:5.2px;top:120.3px;font-size:8px;line-height:10px">ACON DIGITAL DE...</div>
<div style="left:22.4px;top:1.8px;width:15.6px;height:15.4px;background:#535353;border-radius:2px"></div>
<svg style="left:24.3px;top:3.8px" width="12" height="12" viewBox="0 0 12 12"><circle cx="6" cy="6" r="4.3" fill="none" stroke="#f6880f" stroke-width="1.3"/><path d="M4.2 7.6A2.4 2.4 0 1 0 5.2 4" fill="none" stroke="#f6880f" stroke-width="1.1"/></svg>
<div style="left:40.5px;top:2.8px;width:91.5px;height:14.5px;background:#1c1c1c;border-radius:3px"></div>
<svg style="left:43px;top:5px" width="13" height="10" viewBox="0 0 13 10"><circle cx="3.6" cy="3.7" r="2.7" fill="none" stroke="#f0f0f0" stroke-width="1.4"/><path d="M5.6 5.7L8 8.1" stroke="#f0f0f0" stroke-width="1.6"/><path d="M7.9 5.2H11.1L9.5 7.2Z" fill="#e6e6e6"/></svg>
<svg style="left:121.2px;top:6.5px" width="7" height="7" viewBox="0 0 7 7"><path d="M0.6 0.6L6.4 6.4M6.4 0.6L0.6 6.4" stroke="#f4f4f4" stroke-width="1.4"/></svg>
<svg style="left:139.3px;top:7px" width="7" height="6" viewBox="0 0 7 6"><path d="M0.3 3H5M3.6 0.8L6.2 3L3.6 5.2" stroke="#d8d8d8" stroke-width="1.3" fill="none"/></svg>
<div style="left:22.4px;top:20.8px;width:127.3px;height:23.9px;background:#454545;border-radius:3px"></div>
<div style="left:22.5px;top:47.6px;width:127.5px;height:113.4px;background:#3c3c3c"></div>
<div style="left:22.5px;top:47.6px;width:121.5px;height:113.4px;background:#2f2f2f;overflow:hidden">
<svg style="left:0;top:0" width="122" height="114" viewBox="0 0 122 114"><path d="M0 22.30H122" stroke="#262626" stroke-width="1"/><path d="M8.76 19.67A9.6 9.6 0 1 1 20.04 19.67" fill="none" stroke="#4e4e4e" stroke-width="1.5"/><path d="M8.76 19.67A9.6 9.6 0 0 1 14.40 2.30" fill="none" stroke="#f6880f" stroke-width="1.7"/><circle cx="14.4" cy="11.9" r="6.4" fill="url(#kg)"/><path d="M14.40 9.20L14.40 5.70" stroke="#fff" stroke-width="1.9"/><path d="M0 44.85H122" stroke="#262626" stroke-width="1"/><path d="M8.76 42.22A9.6 9.6 0 1 1 20.04 42.22" fill="none" stroke="#4e4e4e" stroke-width="1.5"/><circle cx="14.4" cy="34.45" r="6.4" fill="url(#kg)"/><path d="M12.81 36.63L10.76 39.47" stroke="#fff" stroke-width="1.9"/><path d="M0 67.40H122" stroke="#262626" stroke-width="1"/><path d="M8.76 64.77A9.6 9.6 0 1 1 20.04 64.77" fill="none" stroke="#4e4e4e" stroke-width="1.5"/><circle cx="14.4" cy="57.0" r="6.4" fill="url(#kg)"/><path d="M12.81 59.18L10.76 62.02" stroke="#fff" stroke-width="1.9"/><path d="M0 89.95H122" stroke="#262626" stroke-width="1"/><path d="M8.76 87.32A9.6 9.6 0 1 1 20.04 87.32" fill="none" stroke="#4e4e4e" stroke-width="1.5"/><path d="M8.76 87.32A9.6 9.6 0 0 1 5.61 75.68" fill="none" stroke="#f6880f" stroke-width="1.7"/><circle cx="14.4" cy="79.55" r="6.4" fill="url(#kg)"/><path d="M11.93 78.46L8.73 77.05" stroke="#fff" stroke-width="1.9"/><path d="M0 112.50H122" stroke="#262626" stroke-width="1"/><path d="M8.76 109.87A9.6 9.6 0 1 1 20.04 109.87" fill="none" stroke="#4e4e4e" stroke-width="1.5"/><path d="M8.76 109.87A9.6 9.6 0 0 1 14.40 92.50" fill="none" stroke="#f6880f" stroke-width="1.7"/><circle cx="14.4" cy="102.1" r="6.4" fill="url(#kg)"/><path d="M14.40 99.40L14.40 95.90" stroke="#fff" stroke-width="1.9"/><path d="M0 135.05H122" stroke="#262626" stroke-width="1"/><path d="M8.76 132.42A9.6 9.6 0 1 1 20.04 132.42" fill="none" stroke="#4e4e4e" stroke-width="1.5"/><path d="M8.76 132.42A9.6 9.6 0 0 1 6.29 119.51" fill="none" stroke="#f6880f" stroke-width="1.7"/><circle cx="14.4" cy="124.65" r="6.4" fill="url(#kg)"/><path d="M12.12 123.20L9.17 121.33" stroke="#fff" stroke-width="1.9"/></svg>
<div class="pname" style="left:29.6px;top:2.20px">Sensitivity</div>
<div class="pname" style="left:29.6px;top:11.70px">0.0 %</div>
<div class="pname" style="left:29.6px;top:24.75px">Maximum Attenuation</div>
<div class="pname" style="left:29.6px;top:34.25px">-60.0 dB</div>
<div class="pname" style="left:29.6px;top:47.30px">Low Shelf Enable</div>
<div class="pname" style="left:29.6px;top:56.80px">Off</div>
<div class="pname" style="left:29.6px;top:69.85px">Low Shelf Frequency</div>
<div class="pname" style="left:29.6px;top:79.35px">100 Hz</div>
<div class="pname" style="left:29.6px;top:92.40px">Low Shelf Emphasis</div>
<div class="pname" style="left:29.6px;top:101.90px">0 %</div>
<div class="pname" style="left:29.6px;top:114.95px">Low Shelf Slope</div>
<div class="pname" style="left:29.6px;top:124.45px">12 dB</div>
</div>
<div style="left:144px;top:47.1px;width:6px;height:34.7px;background:#646464"></div>
<svg style="left:22.5px;top:20.8px" width="40" height="26" viewBox="0 0 40 26"><path d="M8.76 20.87A9.6 9.6 0 1 1 20.04 20.87" fill="none" stroke="#333" stroke-width="1.5"/><path d="M8.76 20.87A9.6 9.6 0 0 1 14.40 3.50" fill="none" stroke="#f6880f" stroke-width="1.7"/><circle cx="14.4" cy="13.1" r="6.4" fill="url(#kg)"/><path d="M14.40 10.40L14.40 6.90" stroke="#fff" stroke-width="1.9"/></svg>
<div class="pname" style="left:52.1px;top:23.7px">Sensitivity</div>
<div class="pname" style="left:52.1px;top:33.2px">0.0 %</div>
</div>
<svg style="left:383.8px;top:336.5px" width="7" height="7"><path d="M3.5 0V7M0 3.5H7" stroke="#b8b8b8" stroke-width="1.1"/></svg>
<div class="dev" style="left:395px;top:258.2px;width:152px;height:163.6px">
<div style="left:0;top:0;width:20.6px;height:164px;background:#454545"></div>
<svg style="left:0;top:0" width="21" height="164" viewBox="0 0 21 164"><path d="M7.5 7.4A3.7 3.7 0 1 0 12.5 7.4" stroke="#f6880f" stroke-width="1.4" fill="none"/><path d="M10 5.2V10" stroke="#f6880f" stroke-width="1.4"/><path d="M5.8 22.2H8.8L9.5 23.4H14.1V29.2H5.8Z" fill="#b9b9b9"/><path d="M7.3 25H14.1" stroke="#454545" stroke-width="0.8"/><rect x="5.7" y="126.8" width="8.8" height="6.8" rx="1.5" fill="none" stroke="#b4b4b4" stroke-width="1.4"/><path d="M5.9 140.4H7.9V142.2H5.9ZM9 140.4H11V142.2H9ZM12.1 140.4H14.1V142.2H12.1ZM5.9 143.6H7.9V145.4H5.9ZM9 143.6H11V145.4H9ZM12.1 143.6H14.1V145.4H12.1Z" fill="#a8a8a8"/><circle cx="7.4" cy="155.4" r="1.4" fill="none" stroke="#b4b4b4" stroke-width="1"/><path d="M8.8 155.4H13.6M11.9 153.8L13.8 155.4L11.9 157" stroke="#b4b4b4" stroke-width="1" fill="none"/></svg>
<div class="vt" style="left:5.2px;top:120.3px;font-size:8px;line-height:10px">ACON DIGITAL DE...</div>
<div style="left:22.4px;top:1.8px;width:15.6px;height:15.4px;background:#535353;border-radius:2px"></div>
<svg style="left:24.3px;top:3.8px" width="12" height="12" viewBox="0 0 12 12"><circle cx="6" cy="6" r="4.3" fill="none" stroke="#f6880f" stroke-width="1.3"/><path d="M4.2 7.6A2.4 2.4 0 1 0 5.2 4" fill="none" stroke="#f6880f" stroke-width="1.1"/></svg>
<div style="left:40.5px;top:2.8px;width:91.5px;height:14.5px;background:#1c1c1c;border-radius:3px"></div>
<svg style="left:43px;top:5px" width="13" height="10" viewBox="0 0 13 10"><circle cx="3.6" cy="3.7" r="2.7" fill="none" stroke="#f0f0f0" stroke-width="1.4"/><path d="M5.6 5.7L8 8.1" stroke="#f0f0f0" stroke-width="1.6"/><path d="M7.9 5.2H11.1L9.5 7.2Z" fill="#e6e6e6"/></svg>
<svg style="left:121.2px;top:6.5px" width="7" height="7" viewBox="0 0 7 7"><path d="M0.6 0.6L6.4 6.4M6.4 0.6L0.6 6.4" stroke="#f4f4f4" stroke-width="1.4"/></svg>
<svg style="left:139.3px;top:7px" width="7" height="6" viewBox="0 0 7 6"><path d="M0.3 3H5M3.6 0.8L6.2 3L3.6 5.2" stroke="#d8d8d8" stroke-width="1.3" fill="none"/></svg>
<div style="left:22.4px;top:20.8px;width:127.3px;height:23.9px;background:#454545;border-radius:3px"></div>
<div style="left:22.5px;top:47.6px;width:127.5px;height:113.4px;background:#3c3c3c"></div>
<div style="left:22.5px;top:47.6px;width:121.5px;height:113.4px;background:#2f2f2f;overflow:hidden">
<svg style="left:0;top:0" width="122" height="114" viewBox="0 0 122 114"><path d="M0 22.30H122" stroke="#262626" stroke-width="1"/><path d="M8.76 19.67A9.6 9.6 0 1 1 20.04 19.67" fill="none" stroke="#4e4e4e" stroke-width="1.5"/><path d="M8.76 19.67A9.6 9.6 0 0 1 6.17 16.84" fill="none" stroke="#f6880f" stroke-width="1.7"/><circle cx="14.4" cy="11.9" r="6.4" fill="url(#kg)"/><path d="M12.08 13.29L9.08 15.09" stroke="#fff" stroke-width="1.9"/><path d="M0 44.85H122" stroke="#262626" stroke-width="1"/><path d="M8.76 42.22A9.6 9.6 0 1 1 20.04 42.22" fill="none" stroke="#4e4e4e" stroke-width="1.5"/><circle cx="14.4" cy="34.45" r="6.4" fill="url(#kg)"/><path d="M12.81 36.63L10.76 39.47" stroke="#fff" stroke-width="1.9"/><path d="M0 67.40H122" stroke="#262626" stroke-width="1"/><path d="M8.76 64.77A9.6 9.6 0 1 1 20.04 64.77" fill="none" stroke="#4e4e4e" stroke-width="1.5"/><path d="M8.76 64.77A9.6 9.6 0 0 1 6.17 61.94" fill="none" stroke="#f6880f" stroke-width="1.7"/><circle cx="14.4" cy="57.0" r="6.4" fill="url(#kg)"/><path d="M12.08 58.39L9.08 60.19" stroke="#fff" stroke-width="1.9"/><path d="M0 89.95H122" stroke="#262626" stroke-width="1"/><path d="M8.76 87.32A9.6 9.6 0 1 1 20.04 87.32" fill="none" stroke="#4e4e4e" stroke-width="1.5"/><path d="M8.76 87.32A9.6 9.6 0 0 1 4.82 78.95" fill="none" stroke="#f6880f" stroke-width="1.7"/><circle cx="14.4" cy="79.55" r="6.4" fill="url(#kg)"/><path d="M11.71 79.38L8.21 79.16" stroke="#fff" stroke-width="1.9"/><path d="M0 112.50H122" stroke="#262626" stroke-width="1"/><path d="M8.76 109.87A9.6 9.6 0 1 1 20.04 109.87" fill="none" stroke="#4e4e4e" stroke-width="1.5"/><circle cx="14.4" cy="102.1" r="6.4" fill="url(#kg)"/><path d="M12.81 104.28L10.76 107.12" stroke="#fff" stroke-width="1.9"/><path d="M0 135.05H122" stroke="#262626" stroke-width="1"/><path d="M8.76 132.42A9.6 9.6 0 1 1 20.04 132.42" fill="none" stroke="#4e4e4e" stroke-width="1.5"/><circle cx="14.4" cy="124.65" r="6.4" fill="url(#kg)"/><path d="M12.81 126.83L10.76 129.67" stroke="#fff" stroke-width="1.9"/></svg>
<div class="pname" style="left:29.6px;top:2.20px">Frequency</div>
<div class="pname" style="left:29.6px;top:11.70px">50.00 Hz</div>
<div class="pname" style="left:29.6px;top:24.75px">Auto Fine-tune</div>
<div class="pname" style="left:29.6px;top:34.25px">Off</div>
<div class="pname" style="left:29.6px;top:47.30px">Sensitivity</div>
<div class="pname" style="left:29.6px;top:56.80px">10.0 %</div>
<div class="pname" style="left:29.6px;top:69.85px">Adaptivity</div>
<div class="pname" style="left:29.6px;top:79.35px">15.0 Hz/s</div>
<div class="pname" style="left:29.6px;top:92.40px">Harmonics</div>
<div class="pname" style="left:29.6px;top:101.90px">1</div>
<div class="pname" style="left:29.6px;top:114.95px">Mode</div>
<div class="pname" style="left:29.6px;top:124.45px">0</div>
</div>
<div style="left:144px;top:47.1px;width:6px;height:57.7px;background:#646464"></div>
<svg style="left:22.5px;top:20.8px" width="40" height="26" viewBox="0 0 40 26"><path d="M8.76 20.87A9.6 9.6 0 1 1 20.04 20.87" fill="none" stroke="#333" stroke-width="1.5"/><path d="M8.76 20.87A9.6 9.6 0 0 1 6.17 18.04" fill="none" stroke="#f6880f" stroke-width="1.7"/><circle cx="14.4" cy="13.1" r="6.4" fill="url(#kg)"/><path d="M12.08 14.49L9.08 16.29" stroke="#fff" stroke-width="1.9"/></svg>
<div class="pname" style="left:52.1px;top:23.7px">Frequency</div>
<div class="pname" style="left:52.1px;top:33.2px">50.00 Hz</div>
</div>
<svg style="left:551.9px;top:336.5px" width="7" height="7"><path d="M3.5 0V7M0 3.5H7" stroke="#b8b8b8" stroke-width="1.1"/></svg>
<div class="dev" style="left:563px;top:258.2px;width:152px;height:163.6px">
<div style="left:0;top:0;width:20.6px;height:164px;background:#454545"></div>
<svg style="left:0;top:0" width="21" height="164" viewBox="0 0 21 164"><path d="M7.5 7.4A3.7 3.7 0 1 0 12.5 7.4" stroke="#f6880f" stroke-width="1.4" fill="none"/><path d="M10 5.2V10" stroke="#f6880f" stroke-width="1.4"/><path d="M5.8 22.2H8.8L9.5 23.4H14.1V29.2H5.8Z" fill="#b9b9b9"/><path d="M7.3 25H14.1" stroke="#454545" stroke-width="0.8"/><rect x="5.7" y="126.8" width="8.8" height="6.8" rx="1.5" fill="none" stroke="#b4b4b4" stroke-width="1.4"/><path d="M5.9 140.4H7.9V142.2H5.9ZM9 140.4H11V142.2H9ZM12.1 140.4H14.1V142.2H12.1ZM5.9 143.6H7.9V145.4H5.9ZM9 143.6H11V145.4H9ZM12.1 143.6H14.1V145.4H12.1Z" fill="#a8a8a8"/><circle cx="7.4" cy="155.4" r="1.4" fill="none" stroke="#b4b4b4" stroke-width="1"/><path d="M8.8 155.4H13.6M11.9 153.8L13.8 155.4L11.9 157" stroke="#b4b4b4" stroke-width="1" fill="none"/></svg>
<div class="vt" style="left:5.2px;top:120.3px;font-size:8px;line-height:10px">ACON DIGITAL DE...</div>
<div style="left:22.4px;top:1.8px;width:15.6px;height:15.4px;background:#535353;border-radius:2px"></div>
<svg style="left:24.3px;top:3.8px" width="12" height="12" viewBox="0 0 12 12"><circle cx="6" cy="6" r="4.3" fill="none" stroke="#f6880f" stroke-width="1.3"/><path d="M4.2 7.6A2.4 2.4 0 1 0 5.2 4" fill="none" stroke="#f6880f" stroke-width="1.1"/></svg>
<div style="left:40.5px;top:2.8px;width:91.5px;height:14.5px;background:#1c1c1c;border-radius:3px"></div>
<svg style="left:43px;top:5px" width="13" height="10" viewBox="0 0 13 10"><circle cx="3.6" cy="3.7" r="2.7" fill="none" stroke="#f0f0f0" stroke-width="1.4"/><path d="M5.6 5.7L8 8.1" stroke="#f0f0f0" stroke-width="1.6"/><path d="M7.9 5.2H11.1L9.5 7.2Z" fill="#e6e6e6"/></svg>
<svg style="left:121.2px;top:6.5px" width="7" height="7" viewBox="0 0 7 7"><path d="M0.6 0.6L6.4 6.4M6.4 0.6L0.6 6.4" stroke="#f4f4f4" stroke-width="1.4"/></svg>
<svg style="left:139.3px;top:7px" width="7" height="6" viewBox="0 0 7 6"><path d="M0.3 3H5M3.6 0.8L6.2 3L3.6 5.2" stroke="#d8d8d8" stroke-width="1.3" fill="none"/></svg>
<div style="left:22.4px;top:20.8px;width:127.3px;height:23.9px;background:#454545;border-radius:3px"></div>
<div style="left:22.5px;top:47.6px;width:127.5px;height:113.4px;background:#3c3c3c"></div>
<div style="left:22.5px;top:47.6px;width:121.5px;height:113.4px;background:#2f2f2f;overflow:hidden">
<svg style="left:0;top:0" width="122" height="114" viewBox="0 0 122 114"><path d="M0 22.30H122" stroke="#262626" stroke-width="1"/><path d="M8.76 19.67A9.6 9.6 0 1 1 20.04 19.67" fill="none" stroke="#4e4e4e" stroke-width="1.5"/><path d="M8.76 19.67A9.6 9.6 0 0 1 6.17 16.84" fill="none" stroke="#f6880f" stroke-width="1.7"/><circle cx="14.4" cy="11.9" r="6.4" fill="url(#kg)"/><path d="M12.08 13.29L9.08 15.09" stroke="#fff" stroke-width="1.9"/><path d="M0 44.85H122" stroke="#262626" stroke-width="1"/><path d="M8.76 42.22A9.6 9.6 0 1 1 20.04 42.22" fill="none" stroke="#4e4e4e" stroke-width="1.5"/><circle cx="14.4" cy="34.45" r="6.4" fill="url(#kg)"/><path d="M12.81 36.63L10.76 39.47" stroke="#fff" stroke-width="1.9"/><path d="M0 67.40H122" stroke="#262626" stroke-width="1"/><path d="M8.76 64.77A9.6 9.6 0 1 1 20.04 64.77" fill="none" stroke="#4e4e4e" stroke-width="1.5"/><path d="M8.76 64.77A9.6 9.6 0 0 1 6.17 61.94" fill="none" stroke="#f6880f" stroke-width="1.7"/><circle cx="14.4" cy="57.0" r="6.4" fill="url(#kg)"/><path d="M12.08 58.39L9.08 60.19" stroke="#fff" stroke-width="1.9"/><path d="M0 89.95H122" stroke="#262626" stroke-width="1"/><path d="M8.76 87.32A9.6 9.6 0 1 1 20.04 87.32" fill="none" stroke="#4e4e4e" stroke-width="1.5"/><path d="M8.76 87.32A9.6 9.6 0 0 1 4.82 78.95" fill="none" stroke="#f6880f" stroke-width="1.7"/><circle cx="14.4" cy="79.55" r="6.4" fill="url(#kg)"/><path d="M11.71 79.38L8.21 79.16" stroke="#fff" stroke-width="1.9"/><path d="M0 112.50H122" stroke="#262626" stroke-width="1"/><path d="M8.76 109.87A9.6 9.6 0 1 1 20.04 109.87" fill="none" stroke="#4e4e4e" stroke-width="1.5"/><circle cx="14.4" cy="102.1" r="6.4" fill="url(#kg)"/><path d="M12.81 104.28L10.76 107.12" stroke="#fff" stroke-width="1.9"/><path d="M0 135.05H122" stroke="#262626" stroke-width="1"/><path d="M8.76 132.42A9.6 9.6 0 1 1 20.04 132.42" fill="none" stroke="#4e4e4e" stroke-width="1.5"/><circle cx="14.4" cy="124.65" r="6.4" fill="url(#kg)"/><path d="M12.81 126.83L10.76 129.67" stroke="#fff" stroke-width="1.9"/></svg>
<div class="pname" style="left:29.6px;top:2.20px">Frequency</div>
<div class="pname" style="left:29.6px;top:11.70px">50.00 Hz</div>
<div class="pname" style="left:29.6px;top:24.75px">Auto Fine-tune</div>
<div class="pname" style="left:29.6px;top:34.25px">Off</div>
<div class="pname" style="left:29.6px;top:47.30px">Sensitivity</div>
<div class="pname" style="left:29.6px;top:56.80px">10.0 %</div>
<div class="pname" style="left:29.6px;top:69.85px">Adaptivity</div>
<div class="pname" style="left:29.6px;top:79.35px">15.0 Hz/s</div>
<div class="pname" style="left:29.6px;top:92.40px">Harmonics</div>
<div class="pname" style="left:29.6px;top:101.90px">1</div>
<div class="pname" style="left:29.6px;top:114.95px">Mode</div>
<div class="pname" style="left:29.6px;top:124.45px">0</div>
</div>
<div style="left:144px;top:47.1px;width:6px;height:57.7px;background:#646464"></div>
<svg style="left:22.5px;top:20.8px" width="40" height="26" viewBox="0 0 40 26"><path d="M8.76 20.87A9.6 9.6 0 1 1 20.04 20.87" fill="none" stroke="#333" stroke-width="1.5"/><path d="M8.76 20.87A9.6 9.6 0 0 1 6.17 18.04" fill="none" stroke="#f6880f" stroke-width="1.7"/><circle cx="14.4" cy="13.1" r="6.4" fill="url(#kg)"/><path d="M12.08 14.49L9.08 16.29" stroke="#fff" stroke-width="1.9"/></svg>
<div class="pname" style="left:52.1px;top:23.7px">Frequency</div>
<div class="pname" style="left:52.1px;top:33.2px">50.00 Hz</div>
</div>
<svg style="left:719.8px;top:336.5px" width="7" height="7"><path d="M3.5 0V7M0 3.5H7" stroke="#b8b8b8" stroke-width="1.1"/></svg>
<div class="dev" style="left:731px;top:258.2px;width:152px;height:163.6px">
<div style="left:0;top:0;width:20.6px;height:164px;background:#454545"></div>
<svg style="left:0;top:0" width="21" height="164" viewBox="0 0 21 164"><path d="M7.5 7.4A3.7 3.7 0 1 0 12.5 7.4" stroke="#f6880f" stroke-width="1.4" fill="none"/><path d="M10 5.2V10" stroke="#f6880f" stroke-width="1.4"/><path d="M5.8 22.2H8.8L9.5 23.4H14.1V29.2H5.8Z" fill="#b9b9b9"/><path d="M7.3 25H14.1" stroke="#454545" stroke-width="0.8"/><rect x="5.7" y="126.8" width="8.8" height="6.8" rx="1.5" fill="none" stroke="#b4b4b4" stroke-width="1.4"/><path d="M5.9 140.4H7.9V142.2H5.9ZM9 140.4H11V142.2H9ZM12.1 140.4H14.1V142.2H12.1ZM5.9 143.6H7.9V145.4H5.9ZM9 143.6H11V145.4H9ZM12.1 143.6H14.1V145.4H12.1Z" fill="#a8a8a8"/><circle cx="7.4" cy="155.4" r="1.4" fill="none" stroke="#b4b4b4" stroke-width="1"/><path d="M8.8 155.4H13.6M11.9 153.8L13.8 155.4L11.9 157" stroke="#b4b4b4" stroke-width="1" fill="none"/></svg>
<div class="vt" style="left:5.2px;top:120.3px;font-size:8px;line-height:10px">ACON DIGITAL DE...</div>
<div style="left:22.4px;top:1.8px;width:15.6px;height:15.4px;background:#535353;border-radius:2px"></div>
<svg style="left:24.3px;top:3.8px" width="12" height="12" viewBox="0 0 12 12"><circle cx="6" cy="6" r="4.3" fill="none" stroke="#f6880f" stroke-width="1.3"/><path d="M4.2 7.6A2.4 2.4 0 1 0 5.2 4" fill="none" stroke="#f6880f" stroke-width="1.1"/></svg>
<div style="left:40.5px;top:2.8px;width:91.5px;height:14.5px;background:#1c1c1c;border-radius:3px"></div>
<svg style="left:43px;top:5px" width="13" height="10" viewBox="0 0 13 10"><circle cx="3.6" cy="3.7" r="2.7" fill="none" stroke="#f0f0f0" stroke-width="1.4"/><path d="M5.6 5.7L8 8.1" stroke="#f0f0f0" stroke-width="1.6"/><path d="M7.9 5.2H11.1L9.5 7.2Z" fill="#e6e6e6"/></svg>
<svg style="left:121.2px;top:6.5px" width="7" height="7" viewBox="0 0 7 7"><path d="M0.6 0.6L6.4 6.4M6.4 0.6L0.6 6.4" stroke="#f4f4f4" stroke-width="1.4"/></svg>
<svg style="left:139.3px;top:7px" width="7" height="6" viewBox="0 0 7 6"><path d="M0.3 3H5M3.6 0.8L6.2 3L3.6 5.2" stroke="#d8d8d8" stroke-width="1.3" fill="none"/></svg>
<div style="left:22.4px;top:20.8px;width:127.3px;height:23.9px;background:#454545;border-radius:3px"></div>
<div style="left:22.5px;top:47.6px;width:127.5px;height:113.4px;background:#3c3c3c"></div>
<div style="left:22.5px;top:47.6px;width:121.5px;height:113.4px;background:#2f2f2f;overflow:hidden">
<svg style="left:0;top:0" width="122" height="114" viewBox="0 0 122 114"><path d="M0 10.70H122" stroke="#262626" stroke-width="1"/><path d="M8.76 8.07A9.6 9.6 0 1 1 20.04 8.07" fill="none" stroke="#4e4e4e" stroke-width="1.5"/><path d="M8.76 8.07A9.6 9.6 0 0 1 14.40 -9.30" fill="none" stroke="#f6880f" stroke-width="1.7"/><circle cx="14.4" cy="0.3" r="6.4" fill="url(#kg)"/><path d="M14.40 -2.40L14.40 -5.90" stroke="#fff" stroke-width="1.9"/><path d="M0 33.25H122" stroke="#262626" stroke-width="1"/><path d="M8.76 30.62A9.6 9.6 0 1 1 20.04 30.62" fill="none" stroke="#4e4e4e" stroke-width="1.5"/><circle cx="14.4" cy="22.85" r="6.4" fill="url(#kg)"/><path d="M12.81 25.03L10.76 27.87" stroke="#fff" stroke-width="1.9"/><path d="M0 55.80H122" stroke="#262626" stroke-width="1"/><path d="M8.76 53.17A9.6 9.6 0 1 1 20.04 53.17" fill="none" stroke="#4e4e4e" stroke-width="1.5"/><circle cx="14.4" cy="45.4" r="6.4" fill="url(#kg)"/><path d="M12.81 47.58L10.76 50.42" stroke="#fff" stroke-width="1.9"/><path d="M0 78.35H122" stroke="#262626" stroke-width="1"/><path d="M8.76 75.72A9.6 9.6 0 1 1 20.04 75.72" fill="none" stroke="#4e4e4e" stroke-width="1.5"/><path d="M8.76 75.72A9.6 9.6 0 0 1 5.61 64.08" fill="none" stroke="#f6880f" stroke-width="1.7"/><circle cx="14.4" cy="67.95" r="6.4" fill="url(#kg)"/><path d="M11.93 66.86L8.73 65.45" stroke="#fff" stroke-width="1.9"/><path d="M0 100.90H122" stroke="#262626" stroke-width="1"/><path d="M8.76 98.27A9.6 9.6 0 1 1 20.04 98.27" fill="none" stroke="#4e4e4e" stroke-width="1.5"/><path d="M8.76 98.27A9.6 9.6 0 0 1 14.40 80.90" fill="none" stroke="#f6880f" stroke-width="1.7"/><circle cx="14.4" cy="90.5" r="6.4" fill="url(#kg)"/><path d="M14.40 87.80L14.40 84.30" stroke="#fff" stroke-width="1.9"/><path d="M0 123.45H122" stroke="#262626" stroke-width="1"/><path d="M8.76 120.82A9.6 9.6 0 1 1 20.04 120.82" fill="none" stroke="#4e4e4e" stroke-width="1.5"/><path d="M8.76 120.82A9.6 9.6 0 0 1 6.29 107.91" fill="none" stroke="#f6880f" stroke-width="1.7"/><circle cx="14.4" cy="113.05" r="6.4" fill="url(#kg)"/><path d="M12.12 111.60L9.17 109.73" stroke="#fff" stroke-width="1.9"/></svg>
<div class="pname" style="left:29.6px;top:-9.40px">Sensitivity</div>
<div class="pname" style="left:29.6px;top:0.10px">0.0 %</div>
<div class="pname" style="left:29.6px;top:13.15px">Maximum Attenuation</div>
<div class="pname" style="left:29.6px;top:22.65px">-60.0 dB</div>
<div class="pname" style="left:29.6px;top:35.70px">Low Shelf Enable</div>
<div class="pname" style="left:29.6px;top:45.20px">Off</div>
<div class="pname" style="left:29.6px;top:58.25px">Low Shelf Frequency</div>
<div class="pname" style="left:29.6px;top:67.75px">100 Hz</div>
<div class="pname" style="left:29.6px;top:80.80px">Low Shelf Emphasis</div>
<div class="pname" style="left:29.6px;top:90.30px">0 %</div>
<div class="pname" style="left:29.6px;top:103.35px">Low Shelf Slope</div>
<div class="pname" style="left:29.6px;top:112.85px">12 dB</div>
</div>
<div style="left:144px;top:51.3px;width:6px;height:34.0px;background:#646464"></div>
<svg style="left:22.5px;top:20.8px" width="40" height="26" viewBox="0 0 40 26"><path d="M8.76 20.87A9.6 9.6 0 1 1 20.04 20.87" fill="none" stroke="#333" stroke-width="1.5"/><path d="M8.76 20.87A9.6 9.6 0 0 1 14.40 3.50" fill="none" stroke="#f6880f" stroke-width="1.7"/><circle cx="14.4" cy="13.1" r="6.4" fill="url(#kg)"/><path d="M14.40 10.40L14.40 6.90" stroke="#fff" stroke-width="1.9"/></svg>
<div class="pname" style="left:52.1px;top:23.7px">Sensitivity</div>
<div class="pname" style="left:52.1px;top:33.2px">0.0 %</div>
</div>
<svg style="left:888.1px;top:336.5px" width="7" height="7"><path d="M3.5 0V7M0 3.5H7" stroke="#b8b8b8" stroke-width="1.1"/></svg>
<div class="dev" style="left:899px;top:258.2px;width:59.3px;height:163.6px">
<div style="left:0;top:0;width:20.6px;height:164px;background:#454545"></div>
<svg style="left:0;top:0" width="21" height="164" viewBox="0 0 21 164"><path d="M7.5 7.4A3.7 3.7 0 1 0 12.5 7.4" stroke="#f6880f" stroke-width="1.4" fill="none"/><path d="M10 5.2V10" stroke="#f6880f" stroke-width="1.4"/><path d="M5.8 22.2H8.8L9.5 23.4H14.1V29.2H5.8Z" fill="#b9b9b9"/><path d="M7.3 25H14.1" stroke="#454545" stroke-width="0.8"/><rect x="5.7" y="126.8" width="8.8" height="6.8" rx="1.5" fill="none" stroke="#b4b4b4" stroke-width="1.4"/><path d="M5.9 140.4H7.9V142.2H5.9ZM9 140.4H11V142.2H9ZM12.1 140.4H14.1V142.2H12.1ZM5.9 143.6H7.9V145.4H5.9ZM9 143.6H11V145.4H9ZM12.1 143.6H14.1V145.4H12.1Z" fill="#a8a8a8"/><circle cx="7.4" cy="155.4" r="1.4" fill="none" stroke="#b4b4b4" stroke-width="1"/><path d="M8.8 155.4H13.6M11.9 153.8L13.8 155.4L11.9 157" stroke="#b4b4b4" stroke-width="1" fill="none"/></svg>
<div class="vt" style="left:5.2px;top:120.3px;font-size:8px;line-height:10px">ACON DIGITAL EQ...</div>
<div style="left:22.4px;top:1.8px;width:15.6px;height:15.4px;background:#535353;border-radius:2px"></div>
<svg style="left:24.3px;top:3.8px" width="12" height="12" viewBox="0 0 12 12"><circle cx="6" cy="6" r="4.3" fill="none" stroke="#f6880f" stroke-width="1.3"/><path d="M4.2 7.6A2.4 2.4 0 1 0 5.2 4" fill="none" stroke="#f6880f" stroke-width="1.1"/></svg>
<div style="left:40.5px;top:2.8px;width:91.5px;height:14.5px;background:#1c1c1c;border-radius:3px"></div>
<svg style="left:43px;top:5px" width="13" height="10" viewBox="0 0 13 10"><circle cx="3.6" cy="3.7" r="2.7" fill="none" stroke="#f0f0f0" stroke-width="1.4"/><path d="M5.6 5.7L8 8.1" stroke="#f0f0f0" stroke-width="1.6"/><path d="M7.9 5.2H11.1L9.5 7.2Z" fill="#e6e6e6"/></svg>
<svg style="left:121.2px;top:6.5px" width="7" height="7" viewBox="0 0 7 7"><path d="M0.6 0.6L6.4 6.4M6.4 0.6L0.6 6.4" stroke="#f4f4f4" stroke-width="1.4"/></svg>
<svg style="left:139.3px;top:7px" width="7" height="6" viewBox="0 0 7 6"><path d="M0.3 3H5M3.6 0.8L6.2 3L3.6 5.2" stroke="#d8d8d8" stroke-width="1.3" fill="none"/></svg>
<div style="left:22.4px;top:20.8px;width:127.3px;height:23.9px;background:#454545;border-radius:3px"></div>
<div style="left:22.5px;top:47.6px;width:127.5px;height:113.4px;background:#3c3c3c"></div>
<div style="left:22.5px;top:47.6px;width:121.5px;height:113.4px;background:#2f2f2f;overflow:hidden">
<svg style="left:0;top:0" width="122" height="114" viewBox="0 0 122 114"><path d="M0 22.30H122" stroke="#262626" stroke-width="1"/><path d="M8.76 19.67A9.6 9.6 0 1 1 20.04 19.67" fill="none" stroke="#4e4e4e" stroke-width="1.5"/><path d="M8.76 19.67A9.6 9.6 0 0 1 5.07 14.17" fill="none" stroke="#f6880f" stroke-width="1.7"/><circle cx="14.4" cy="11.9" r="6.4" fill="url(#kg)"/><path d="M11.78 12.54L8.38 13.37" stroke="#fff" stroke-width="1.9"/><path d="M0 44.85H122" stroke="#262626" stroke-width="1"/><path d="M8.76 42.22A9.6 9.6 0 1 1 20.04 42.22" fill="none" stroke="#4e4e4e" stroke-width="1.5"/><path d="M8.76 42.22A9.6 9.6 0 1 1 20.04 42.22" fill="none" stroke="#f6880f" stroke-width="1.7"/><circle cx="14.4" cy="34.45" r="6.4" fill="url(#kg)"/><path d="M15.99 36.63L18.04 39.47" stroke="#fff" stroke-width="1.9"/><path d="M0 67.40H122" stroke="#262626" stroke-width="1"/><path d="M8.76 64.77A9.6 9.6 0 1 1 20.04 64.77" fill="none" stroke="#4e4e4e" stroke-width="1.5"/><path d="M8.76 64.77A9.6 9.6 0 1 1 20.04 64.77" fill="none" stroke="#f6880f" stroke-width="1.7"/><circle cx="14.4" cy="57.0" r="6.4" fill="url(#kg)"/><path d="M15.99 59.18L18.04 62.02" stroke="#fff" stroke-width="1.9"/><path d="M0 89.95H122" stroke="#262626" stroke-width="1"/><path d="M8.76 87.32A9.6 9.6 0 1 1 20.04 87.32" fill="none" stroke="#4e4e4e" stroke-width="1.5"/><path d="M8.76 87.32A9.6 9.6 0 1 1 20.04 87.32" fill="none" stroke="#f6880f" stroke-width="1.7"/><circle cx="14.4" cy="79.55" r="6.4" fill="url(#kg)"/><path d="M15.99 81.73L18.04 84.57" stroke="#fff" stroke-width="1.9"/><path d="M0 112.50H122" stroke="#262626" stroke-width="1"/><path d="M8.76 109.87A9.6 9.6 0 1 1 20.04 109.87" fill="none" stroke="#4e4e4e" stroke-width="1.5"/><path d="M8.76 109.87A9.6 9.6 0 1 1 20.04 109.87" fill="none" stroke="#f6880f" stroke-width="1.7"/><circle cx="14.4" cy="102.1" r="6.4" fill="url(#kg)"/><path d="M15.99 104.28L18.04 107.12" stroke="#fff" stroke-width="1.9"/><path d="M0 135.05H122" stroke="#262626" stroke-width="1"/><path d="M8.76 132.42A9.6 9.6 0 1 1 20.04 132.42" fill="none" stroke="#4e4e4e" stroke-width="1.5"/><path d="M8.76 132.42A9.6 9.6 0 1 1 20.04 132.42" fill="none" stroke="#f6880f" stroke-width="1.7"/><circle cx="14.4" cy="124.65" r="6.4" fill="url(#kg)"/><path d="M15.99 126.83L18.04 129.67" stroke="#fff" stroke-width="1.9"/></svg>
<div class="pname" style="left:29.6px;top:2.20px">Filter 1 Type</div>
<div class="pname" style="left:29.6px;top:11.70px">Peak</div>
<div class="pname" style="left:29.6px;top:24.75px">Filter 1 Gain</div>
<div class="pname" style="left:29.6px;top:34.25px">Default</div>
<div class="pname" style="left:29.6px;top:47.30px">Filter 1 Freq</div>
<div class="pname" style="left:29.6px;top:56.80px">Default</div>
<div class="pname" style="left:29.6px;top:69.85px">Filter 1 Q</div>
<div class="pname" style="left:29.6px;top:79.35px">Default</div>
<div class="pname" style="left:29.6px;top:92.40px">Filter 2 Gain</div>
<div class="pname" style="left:29.6px;top:101.90px">Default</div>
<div class="pname" style="left:29.6px;top:114.95px">Filter 2 Freq</div>
<div class="pname" style="left:29.6px;top:124.45px">Default</div>
</div>
<svg style="left:22.5px;top:20.8px" width="40" height="26" viewBox="0 0 40 26"><path d="M8.76 20.87A9.6 9.6 0 1 1 20.04 20.87" fill="none" stroke="#333" stroke-width="1.5"/><path d="M8.76 20.87A9.6 9.6 0 0 1 5.07 15.37" fill="none" stroke="#f6880f" stroke-width="1.7"/><circle cx="14.4" cy="13.1" r="6.4" fill="url(#kg)"/><path d="M11.78 13.74L8.38 14.57" stroke="#fff" stroke-width="1.9"/></svg>
<div class="pname" style="left:52.1px;top:23.7px">Filter 1 Type</div>
<div class="pname" style="left:52.1px;top:33.2px">Peak</div>
</div>
<div style="left:19.5px;top:434.8px;width:940px;height:164.7px;background:#434343;border:1px solid #575757;border-radius:3px"></div>
<div class="padd" style="left:22.7px;top:439.0px;width:44.98px;height:39.35px;"></div>
<div class="pad" style="left:67.63px;top:439.0px;width:44.98px;height:39.35px;"><div class="pl" style="left:0.2px;top:0.2px;width:44.98px;height:39.3px;line-height:39.3px">A</div></div>
<div class="padd" style="left:112.56px;top:439.0px;width:44.98px;height:39.35px;"></div>
<div class="pad" style="left:157.49px;top:439.0px;width:44.98px;height:39.35px;"><div class="pl" style="left:0.2px;top:0.2px;width:44.98px;height:39.3px;line-height:39.3px">B</div></div>
<div class="pad" style="left:202.42px;top:439.0px;width:44.98px;height:39.35px;"><div class="pl" style="left:0.2px;top:0.2px;width:44.98px;height:39.3px;line-height:39.3px">C</div></div>
<div class="pn" style="left:239.35px;top:467.40px;line-height:11px">3</div>
<div class="padd" style="left:247.35px;top:439.0px;width:44.98px;height:39.35px;"></div>
<div class="pad" style="left:292.28px;top:439.0px;width:44.98px;height:39.35px;"><div class="pl" style="left:0.2px;top:0.2px;width:44.98px;height:39.3px;line-height:39.3px">D</div></div>
<div class="padd" style="left:337.21px;top:439.0px;width:44.98px;height:39.35px;"></div>
<div class="pad" style="left:382.14px;top:439.0px;width:44.98px;height:39.35px;"><div class="pl" style="left:0.2px;top:0.2px;width:44.98px;height:39.3px;line-height:39.3px">E</div></div>
<div class="pad" style="left:427.07px;top:439.0px;width:44.98px;height:39.35px;"><div class="pl" style="left:0.2px;top:0.2px;width:44.98px;height:39.3px;line-height:39.3px">F</div></div>
<div class="padd" style="left:472.0px;top:439.0px;width:44.98px;height:39.35px;"></div>
<div class="pad" style="left:516.93px;top:439.0px;width:44.98px;height:39.35px;"><div class="pl" style="left:0.2px;top:0.2px;width:44.98px;height:39.3px;line-height:39.3px">G</div></div>
<div class="padd" style="left:561.86px;top:439.0px;width:44.98px;height:39.35px;"></div>
<div class="pad" style="left:606.79px;top:439.0px;width:44.98px;height:39.35px;"><div class="pl" style="left:0.2px;top:0.2px;width:44.98px;height:39.3px;line-height:39.3px">A</div></div>
<div class="padd" style="left:651.72px;top:439.0px;width:44.98px;height:39.35px;"></div>
<div class="pad" style="left:696.65px;top:439.0px;width:44.98px;height:39.35px;"><div class="pl" style="left:0.2px;top:0.2px;width:44.98px;height:39.3px;line-height:39.3px">B</div></div>
<div class="pad" style="left:741.58px;top:439.0px;width:44.98px;height:39.35px;"><div class="pl" style="left:0.2px;top:0.2px;width:44.98px;height:39.3px;line-height:39.3px">C</div></div>
<div class="pn" style="left:778.51px;top:467.40px;line-height:11px">4</div>
<div class="padd" style="left:786.51px;top:439.0px;width:44.98px;height:39.35px;"></div>
<div class="pad" style="left:831.44px;top:439.0px;width:44.98px;height:39.35px;"><div class="pl" style="left:0.2px;top:0.2px;width:44.98px;height:39.3px;line-height:39.3px">D</div></div>
<div class="padd" style="left:876.37px;top:439.0px;width:44.98px;height:39.35px;"></div>
<div class="padd" style="left:22.7px;top:478.3px;width:44.98px;height:39.35px;"></div>
<div class="pad" style="left:67.63px;top:478.3px;width:44.98px;height:39.35px;"><div class="pl" style="left:0.2px;top:0.2px;width:44.98px;height:39.3px;line-height:39.3px">E</div></div>
<div class="pad" style="left:112.56px;top:478.3px;width:44.98px;height:39.35px;"><div class="pl" style="left:0.2px;top:0.2px;width:44.98px;height:39.3px;line-height:39.3px">F</div></div>
<div class="padd" style="left:157.49px;top:478.3px;width:44.98px;height:39.35px;"></div>
<div class="pad" style="left:202.42px;top:478.3px;width:44.98px;height:39.35px;"><div class="pl" style="left:0.2px;top:0.2px;width:44.98px;height:39.3px;line-height:39.3px">G</div></div>
<div class="padd" style="left:247.35px;top:478.3px;width:44.98px;height:39.35px;"></div>
<div class="pad" style="left:292.28px;top:478.3px;width:44.98px;height:39.35px;"><div class="pl" style="left:0.2px;top:0.2px;width:44.98px;height:39.3px;line-height:39.3px">A</div></div>
<div class="padd" style="left:337.21px;top:478.3px;width:44.98px;height:39.35px;"></div>
<div class="pad" style="left:382.14px;top:478.3px;width:44.98px;height:39.35px;"><div class="pl" style="left:0.2px;top:0.2px;width:44.98px;height:39.3px;line-height:39.3px">B</div></div>
<div class="pad" style="left:427.07px;top:478.3px;width:44.98px;height:39.35px;"><div class="pl" style="left:0.2px;top:0.2px;width:44.98px;height:39.3px;line-height:39.3px">C</div></div>
<div class="pn" style="left:464.00px;top:506.70px;line-height:11px">3</div>
<div class="padd" style="left:472.0px;top:478.3px;width:44.98px;height:39.35px;"></div>
<div class="pad" style="left:516.93px;top:478.3px;width:44.98px;height:39.35px;"><div class="pl" style="left:0.2px;top:0.2px;width:44.98px;height:39.3px;line-height:39.3px">D</div></div>
<div class="padd" style="left:561.86px;top:478.3px;width:44.98px;height:39.35px;"></div>
<div class="pad" style="left:606.79px;top:478.3px;width:44.98px;height:39.35px;"><div class="pl" style="left:0.2px;top:0.2px;width:44.98px;height:39.3px;line-height:39.3px">E</div></div>
<div class="pad" style="left:651.72px;top:478.3px;width:44.98px;height:39.35px;"><div class="pl" style="left:0.2px;top:0.2px;width:44.98px;height:39.3px;line-height:39.3px">F</div></div>
<div class="padd" style="left:696.65px;top:478.3px;width:44.98px;height:39.35px;"></div>
<div class="pad" style="left:741.58px;top:478.3px;width:44.98px;height:39.35px;"><div class="pl" style="left:0.2px;top:0.2px;width:44.98px;height:39.3px;line-height:39.3px">G</div></div>
<div class="padd" style="left:786.51px;top:478.3px;width:44.98px;height:39.35px;"></div>
<div class="pad" style="left:831.44px;top:478.3px;width:44.98px;height:39.35px;"><div class="pl" style="left:0.2px;top:0.2px;width:44.98px;height:39.3px;line-height:39.3px">A</div></div>
<div class="padd" style="left:876.37px;top:478.3px;width:44.98px;height:39.35px;"></div>
<div class="padd" style="left:22.7px;top:517.6px;width:44.98px;height:39.35px;"></div>
<div class="pad" style="left:67.63px;top:517.6px;width:44.98px;height:39.35px;"><div class="pl" style="left:0.2px;top:0.2px;width:44.98px;height:39.3px;line-height:39.3px">B</div></div>
<div class="pad" style="left:112.56px;top:517.6px;width:44.98px;height:39.35px;"><div class="pl" style="left:0.2px;top:0.2px;width:44.98px;height:39.3px;line-height:39.3px">C</div></div>
<div class="pn" style="left:149.49px;top:546.00px;line-height:11px">2</div>
<div class="padd" style="left:157.49px;top:517.6px;width:44.98px;height:39.35px;"></div>
<div class="pad" style="left:202.42px;top:517.6px;width:44.98px;height:39.35px;"><div class="pl" style="left:0.2px;top:0.2px;width:44.98px;height:39.3px;line-height:39.3px">D</div></div>
<div class="padd" style="left:247.35px;top:517.6px;width:44.98px;height:39.35px;"></div>
<div class="pad" style="left:292.28px;top:517.6px;width:44.98px;height:39.35px;"><div class="pl" style="left:0.2px;top:0.2px;width:44.98px;height:39.3px;line-height:39.3px">E</div></div>
<div class="pad" style="left:337.21px;top:517.6px;width:44.98px;height:39.35px;"><div class="pl" style="left:0.2px;top:0.2px;width:44.98px;height:39.3px;line-height:39.3px">F</div></div>
<div class="padd" style="left:382.14px;top:517.6px;width:44.98px;height:39.35px;"></div>
<div class="pad" style="left:427.07px;top:517.6px;width:44.98px;height:39.35px;"><div class="pl" style="left:0.2px;top:0.2px;width:44.98px;height:39.3px;line-height:39.3px">G</div></div>
<div class="padd" style="left:472.0px;top:517.6px;width:44.98px;height:39.35px;"></div>
<div class="pad" style="left:516.93px;top:517.6px;width:44.98px;height:39.35px;"><div class="pl" style="left:0.2px;top:0.2px;width:44.98px;height:39.3px;line-height:39.3px">A</div></div>
<div class="padd" style="left:561.86px;top:517.6px;width:44.98px;height:39.35px;"></div>
<div class="pad" style="left:606.79px;top:517.6px;width:44.98px;height:39.35px;"><div class="pl" style="left:0.2px;top:0.2px;width:44.98px;height:39.3px;line-height:39.3px">B</div></div>
<div class="pad" style="left:651.72px;top:517.6px;width:44.98px;height:39.35px;"><div class="pl" style="left:0.2px;top:0.2px;width:44.98px;height:39.3px;line-height:39.3px">C</div></div>
<div class="pn" style="left:688.65px;top:546.00px;line-height:11px">3</div>
<div class="padd" style="left:696.65px;top:517.6px;width:44.98px;height:39.35px;"></div>
<div class="pad" style="left:741.58px;top:517.6px;width:44.98px;height:39.35px;"><div class="pl" style="left:0.2px;top:0.2px;width:44.98px;height:39.3px;line-height:39.3px">D</div></div>
<div class="padd" style="left:786.51px;top:517.6px;width:44.98px;height:39.35px;"></div>
<div class="pad" style="left:831.44px;top:517.6px;width:44.98px;height:39.35px;"><div class="pl" style="left:0.2px;top:0.2px;width:44.98px;height:39.3px;line-height:39.3px">E</div></div>
<div class="pad" style="left:876.37px;top:517.6px;width:44.98px;height:39.35px;"><div class="pl" style="left:0.2px;top:0.2px;width:44.98px;height:39.3px;line-height:39.3px">F</div></div>
<div class="pad" style="left:22.7px;top:556.9px;width:44.98px;height:39.35px;"><div class="pl" style="left:0.2px;top:0.2px;width:44.98px;height:39.3px;line-height:39.3px">F</div></div>
<div class="padd" style="left:67.63px;top:556.9px;width:44.98px;height:39.35px;"></div>
<div class="pad" style="left:112.56px;top:556.9px;width:44.98px;height:39.35px;"><div class="pl" style="left:0.2px;top:0.2px;width:44.98px;height:39.3px;line-height:39.3px">G</div></div>
<div class="padd" style="left:157.49px;top:556.9px;width:44.98px;height:39.35px;"></div>
<div class="pad" style="left:202.42px;top:556.9px;width:44.98px;height:39.35px;"><div class="pl" style="left:0.2px;top:0.2px;width:44.98px;height:39.3px;line-height:39.3px">A</div></div>
<div class="padd" style="left:247.35px;top:556.9px;width:44.98px;height:39.35px;"></div>
<div class="pad" style="left:292.28px;top:556.9px;width:44.98px;height:39.35px;"><div class="pl" style="left:0.2px;top:0.2px;width:44.98px;height:39.3px;line-height:39.3px">B</div></div>
<div class="pad" style="left:337.21px;top:556.9px;width:44.98px;height:39.35px;"><div class="pl" style="left:0.2px;top:0.2px;width:44.98px;height:39.3px;line-height:39.3px">C</div></div>
<div class="pn" style="left:374.14px;top:585.30px;line-height:11px">2</div>
<div class="padd" style="left:382.14px;top:556.9px;width:44.98px;height:39.35px;"></div>
<div class="pad" style="left:427.07px;top:556.9px;width:44.98px;height:39.35px;"><div class="pl" style="left:0.2px;top:0.2px;width:44.98px;height:39.3px;line-height:39.3px">D</div></div>
<div class="padd" style="left:472.0px;top:556.9px;width:44.98px;height:39.35px;"></div>
<div class="pad" style="left:516.93px;top:556.9px;width:44.98px;height:39.35px;"><div class="pl" style="left:0.2px;top:0.2px;width:44.98px;height:39.3px;line-height:39.3px">E</div></div>
<div class="pad" style="left:561.86px;top:556.9px;width:44.98px;height:39.35px;"><div class="pl" style="left:0.2px;top:0.2px;width:44.98px;height:39.3px;line-height:39.3px">F</div></div>
<div class="padd" style="left:606.79px;top:556.9px;width:44.98px;height:39.35px;"></div>
<div class="pad" style="left:651.72px;top:556.9px;width:44.98px;height:39.35px;"><div class="pl" style="left:0.2px;top:0.2px;width:44.98px;height:39.3px;line-height:39.3px">G</div></div>
<div class="padd" style="left:696.65px;top:556.9px;width:44.98px;height:39.35px;"></div>
<div class="pad" style="left:741.58px;top:556.9px;width:44.98px;height:39.35px;"><div class="pl" style="left:0.2px;top:0.2px;width:44.98px;height:39.3px;line-height:39.3px">A</div></div>
<div class="padd" style="left:786.51px;top:556.9px;width:44.98px;height:39.35px;"></div>
<div class="pad" style="left:831.44px;top:556.9px;width:44.98px;height:39.35px;"><div class="pl" style="left:0.2px;top:0.2px;width:44.98px;height:39.3px;line-height:39.3px">B</div></div>
<div class="pad" style="left:876.37px;top:556.9px;width:44.98px;height:39.35px;"><div class="pl" style="left:0.2px;top:0.2px;width:44.98px;height:39.3px;line-height:39.3px">C</div></div>
<div class="pn" style="left:913.30px;top:585.30px;line-height:11px">3</div>
<svg style="left:22.7px;top:439.0px" width="898.60" height="157.20" viewBox="0 0 898.60 157.20"><path d="M0.00 0V157.20M44.93 0V157.20M89.86 0V157.20M134.79 0V157.20M179.72 0V157.20M224.65 0V157.20M269.58 0V157.20M314.51 0V157.20M359.44 0V157.20M404.37 0V157.20M449.30 0V157.20M494.23 0V157.20M539.16 0V157.20M584.09 0V157.20M629.02 0V157.20M673.95 0V157.20M718.88 0V157.20M763.81 0V157.20M808.74 0V157.20M853.67 0V157.20M898.60 0V157.20M0 0.00H898.60M0 39.30H898.60M0 78.60H898.60M0 117.90H898.60M0 157.20H898.60" stroke="rgba(0,0,0,0.2)" stroke-width="1.2" fill="none"/></svg>
<div class="t" style="left:932.6px;top:438.5px;font-size:20px;line-height:22px;color:#cdcdcd;transform:scaleY(0.9)">«</div>
<svg style="left:933.5px;top:545.2px" width="11" height="13" viewBox="0 0 11 13"><path d="M5.5 0L11 5.8H7.3V13H3.7V5.8H0Z" fill="#fff"/></svg>
<svg style="left:933.5px;top:573.5px" width="11" height="13" viewBox="0 0 11 13"><path d="M5.5 13L11 7.2H7.3V0H3.7V7.2H0Z" fill="#fff"/></svg>
<div style="left:15px;top:600px;width:946px;height:26px;background:#2d2d2d"></div>
<div class="t" style="left:29px;top:608px;font-family:'Liberation Serif',serif;font-weight:bold;font-size:11px;line-height:11px;color:#f4f4f4">i</div>
<div style="left:44.3px;top:606px;width:1px;height:14px;background:#8a8a8a"></div>
<div class="t" style="left:56.5px;top:608.5px;font-size:8.5px;line-height:10.5px;color:#f6880f;letter-spacing:-0.45px;-webkit-text-stroke:0.25px #f6880f;">ARRANGE</div>
<div class="t" style="left:106.5px;top:608.5px;font-size:8.5px;line-height:10.5px;color:#eee;letter-spacing:0.1px;-webkit-text-stroke:0.25px #eee;">MIX</div>
<div class="t" style="left:133.3px;top:608.5px;font-size:8.5px;line-height:10.5px;color:#eee;letter-spacing:-0.3px;-webkit-text-stroke:0.25px #eee;">EDIT</div>
<div style="left:163.5px;top:606px;width:1px;height:14px;background:#8a8a8a"></div>
<svg style="left:174px;top:609px" width="9" height="9" viewBox="0 0 9 9"><path d="M0 0.3H2.2V2.5H0ZM3.4 1.8H5.2V3.6H3.4ZM6.4 2.8H8.8V5.2H6.4ZM1.4 3.9H3.2V5.7H1.4ZM0 6.4H2.2V8.6H0ZM4.4 6.4H6.2V8.2H4.4Z" fill="#ececec"/></svg>
<svg style="left:198px;top:609px" width="9" height="9" viewBox="0 0 9 9"><circle cx="2.4" cy="6.4" r="1.5" fill="none" stroke="#ececec" stroke-width="1.5"/><circle cx="6.4" cy="2.4" r="1.5" fill="none" stroke="#ececec" stroke-width="1.5"/><path d="M3.5 5.3L5.3 3.5" stroke="#ececec" stroke-width="1.5"/></svg>
<svg style="left:220.5px;top:608.5px" width="11" height="10" viewBox="0 0 11 10"><rect x="1" y="1" width="8.8" height="7.8" rx="1.6" fill="none" stroke="#f6880f" stroke-width="1.9"/></svg>
<svg style="left:245px;top:609px" width="9" height="9" viewBox="0 0 9 9"><path d="M0 0H2V8.5H0ZM3.2 0H5.2V8.5H3.2ZM6.4 0H8.4V8.5H6.4Z" fill="#f0f0f0"/></svg>
<svg style="left:843px;top:609px" width="9" height="9" viewBox="0 0 9 9"><path d="M0 1H3L3.8 2.2H8.5V8.2H0Z" fill="#d0d0d0"/><path d="M1.5 3.8H8.5" stroke="#2d2d2d" stroke-width="0.8"/></svg>
<svg style="left:867px;top:608.5px" width="8" height="10" viewBox="0 0 8 10"><path d="M0.3 0.3H5L7.5 2.8V9.3H0.3Z" fill="#d0d0d0"/></svg>
<svg style="left:889.5px;top:609px" width="9" height="9" viewBox="0 0 9 9"><path d="M2.4 2.5H8M1 6.3H6.4" stroke="#e8e8e8" stroke-width="1.3"/><path d="M0.2 2.5L3.2 0.4V4.6ZM8.8 6.3L5.8 4.2V8.4Z" fill="#e8e8e8"/></svg>
<svg style="left:912px;top:608.5px" width="9" height="10" viewBox="0 0 9 10"><path d="M2.5 0.5Q3.5 0 4 1V4L7.5 4.8Q8.5 5 8.3 6L8 9.5H3L0.8 6Q0.5 5 1.5 5L2.5 6Z" fill="#d8d8d8"/></svg>
<div style="left:932.7px;top:606px;width:1px;height:14px;background:#8a8a8a"></div>
<svg style="left:943.5px;top:609px" width="9" height="9" viewBox="0 0 9 9"><path d="M0 0H2.4V8.5H0ZM3 0H5.4V8.5H3ZM6 0H8.4V8.5H6Z" fill="#f6880f"/><path d="M1.7 0H3.7V5H1.7ZM4.7 0H6.7V5H4.7Z" fill="#2d2d2d"/><path d="M2.4 0H3V5H2.4ZM5.4 0H6V5H5.4Z" fill="#f6880f" opacity="0"/></svg>
</div></div>
</body></html>
